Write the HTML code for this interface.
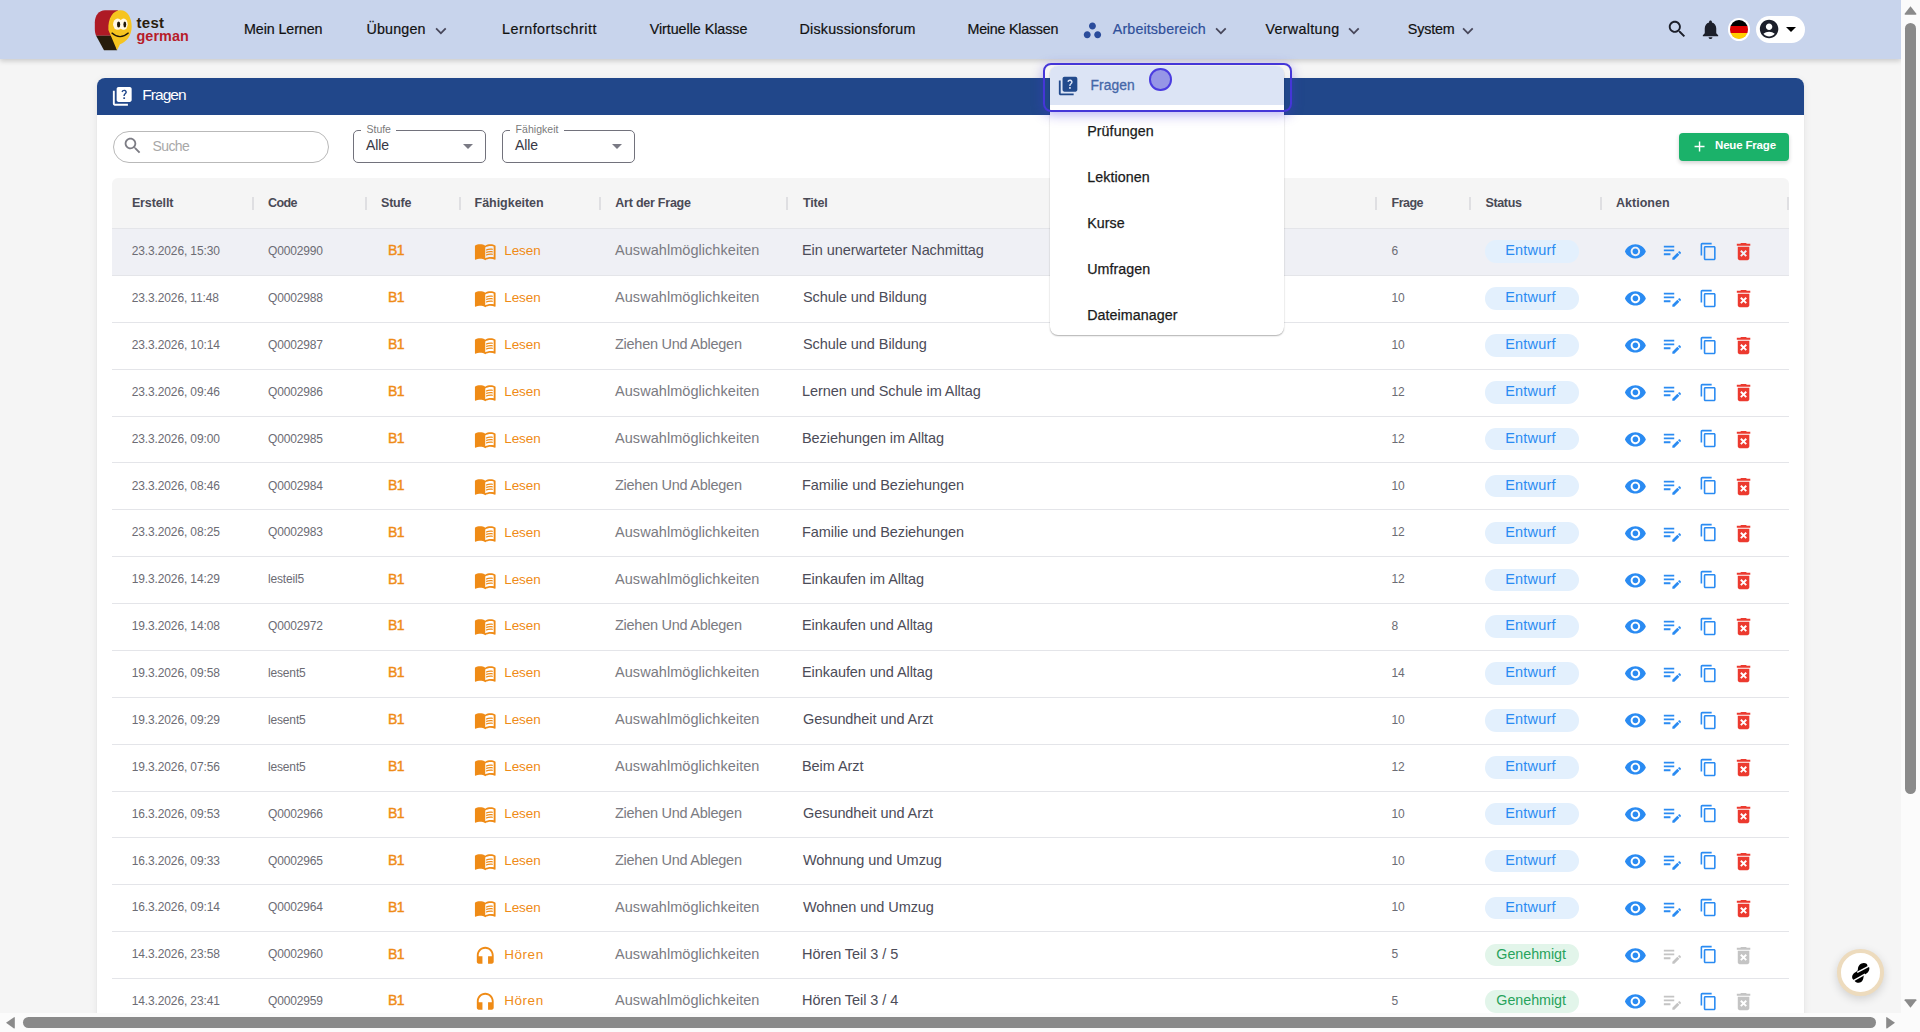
<!DOCTYPE html><html><head><meta charset="utf-8"><style>
*{margin:0;padding:0;box-sizing:border-box}
html,body{width:1920px;height:1032px;overflow:hidden;background:#f5f5f5;font-family:"Liberation Sans",sans-serif}
.t{position:absolute;white-space:nowrap;line-height:1}
.i{position:absolute;display:block;overflow:visible}
#hdr{position:absolute;left:0;top:0;width:1901px;height:59px;background:#c8d4ec;box-shadow:0 2px 5px rgba(0,0,0,0.18)}
#flag{position:absolute;left:1730px;top:20px;width:18px;height:19px;border-radius:50%;overflow:hidden;box-shadow:0 0 0 2px #fff}
#userpill{position:absolute;left:1756px;top:15.5px;width:49px;height:27.5px;border-radius:14px;background:#fff}
#card{position:absolute;left:97px;top:78px;width:1707px;height:1100px;background:#fff;border-radius:8px;box-shadow:0 2px 8px rgba(0,0,0,0.07),0 1px 2px rgba(0,0,0,0.06)}
#cardhdr{position:absolute;left:97px;top:78px;width:1707px;height:37px;background:#21478a;border-radius:8px 8px 0 0}
#sbox{position:absolute;left:113px;top:131px;width:216px;height:32px;border:1px solid #b9b9b9;border-radius:16px}
.sel{position:absolute;top:130px;width:133px;height:33px;border:1px solid #72727c;border-radius:5px}
.gap{position:absolute;top:128px;height:5px;background:#fff}
#btn{position:absolute;left:1679px;top:133px;width:110px;height:28px;background:#1bb26a;border-radius:4px;box-shadow:0 2px 4px rgba(0,0,0,0.18)}
#thead{position:absolute;left:112px;top:178px;width:1677px;height:50px;background:#f5f5f5;border-radius:6px 6px 0 0}
.div{position:absolute;top:197px;width:2px;height:13px;background:#dfdfe2}
.row{position:absolute;left:112px;width:1677px;height:46.875px;border-top:1px solid #e4e5e9}
.chip{position:absolute;left:1485px;width:94px;height:22.5px;border-radius:11.25px}
#menu{position:absolute;left:1050px;top:66px;width:234px;height:269px;background:#fff;border-radius:8px;box-shadow:0 1px 1.5px rgba(0,0,0,0.30),0 0 1px rgba(0,0,0,0.10)}
#mhl{position:absolute;left:1050px;top:66px;width:234px;height:38.7px;background:#dce4f5;border-radius:8px 8px 0 0}
#focus{position:absolute;left:1043px;top:63px;width:248.5px;height:48.7px;border:2px solid #4536d8;border-radius:8px;box-shadow:0 3px 12px rgba(70,55,220,0.38)}
#cursor{position:absolute;left:1149.2px;top:68px;width:22.7px;height:22.7px;border-radius:50%;background:#9696e6;border:2px solid #4b3ce0}
#fab{position:absolute;left:1837.4px;top:949.2px;width:46.5px;height:46.5px;border-radius:50%;background:#fff;border:4px solid #eddbbd;box-shadow:0 3px 10px rgba(0,0,0,0.15)}
#vtrack{position:absolute;left:1901px;top:0;width:19px;height:1013px;background:#fbfbfb}
#htrack{position:absolute;left:0;top:1013px;width:1901px;height:19px;background:#fbfbfb}
#corner{position:absolute;left:1901px;top:1013px;width:19px;height:19px;background:#fbfbfb}
#vthumb{position:absolute;left:1905px;top:23px;width:11px;height:771px;background:#8a8a8a;border-radius:5.5px}
#hthumb{position:absolute;left:23px;top:1017px;width:1853px;height:11px;background:#8a8a8a;border-radius:5.5px}
</style></head><body><div id="hdr"></div>
<svg class="i" style="left:92px;top:6px;width:44px;height:48px" viewBox="0 0 44 48">
<path d="M26 4.2 L13 4.2 C7 4.2 2.8 9.5 2.8 16.5 L2.8 22 C2.8 25.5 3.3 27.8 4.1 29.8 L22 29.8 Z" fill="#ae1a25"/>
<path d="M4.1 29.8 L21 29.8 L25.2 44.3 L12 44.3 Z" fill="#271c0b"/>
<path d="M25 44.3 L16.4 24 C15.8 12 21 4.2 28.5 4.2 C35.5 4.2 39.7 11.5 39.7 20.5 C39.7 29.5 34.5 36 28 38.3 Z" fill="#f6c41f"/>
<ellipse cx="25.7" cy="18.2" rx="4.6" ry="5.6" fill="#fff8e6"/><ellipse cx="31.6" cy="18.2" rx="4.1" ry="5.6" fill="#fff8e6"/>
<ellipse cx="26.6" cy="18.5" rx="1.6" ry="2.9" fill="#1e1608"/><ellipse cx="32.8" cy="18.5" rx="1.4" ry="2.9" fill="#1e1608"/>
<path d="M19.6 26.8 Q28 34.5 36.6 26.8" stroke="#1e1608" stroke-width="1.3" fill="none"/>
</svg>
<div class="t" style="left:136.50px;top:14.50px;font-size:15px;color:#2a1d0e;font-weight:bold;letter-spacing:0.273px;">test</div>
<div class="t" style="left:136.50px;top:28.80px;font-size:14.4px;color:#b71c2a;font-weight:bold;letter-spacing:0.061px;">german</div>
<div class="t" style="left:244.00px;top:21.85px;font-size:14.3px;color:#111;letter-spacing:-0.103px;-webkit-text-stroke:0.2px #111;">Mein Lernen</div>
<div class="t" style="left:366.50px;top:21.85px;font-size:14.3px;color:#111;letter-spacing:0.153px;-webkit-text-stroke:0.2px #111;">Übungen</div>
<svg class="i" style="left:429.76px;top:19.50px;width:21.80px;height:21.80px" viewBox="0 0 24 24"><path fill="#48475a" d="M16.59 8.59 12 13.17 7.41 8.59 6 10l6 6 6-6z"/></svg>
<div class="t" style="left:502.00px;top:21.85px;font-size:14.3px;color:#111;letter-spacing:0.505px;-webkit-text-stroke:0.2px #111;">Lernfortschritt</div>
<div class="t" style="left:649.70px;top:21.85px;font-size:14.3px;color:#111;letter-spacing:-0.042px;-webkit-text-stroke:0.2px #111;">Virtuelle Klasse</div>
<div class="t" style="left:799.60px;top:21.85px;font-size:14.3px;color:#111;letter-spacing:0.193px;-webkit-text-stroke:0.2px #111;">Diskussionsforum</div>
<div class="t" style="left:967.50px;top:21.85px;font-size:14.3px;color:#111;letter-spacing:-0.244px;-webkit-text-stroke:0.2px #111;">Meine Klassen</div>
<svg class="i" style="left:1081.75px;top:19.80px;width:20.90px;height:20.90px" viewBox="0 0 24 24"><path fill="#2b4c9b" d="M6 13c-2.2 0-4 1.8-4 4s1.8 4 4 4 4-1.8 4-4-1.8-4-4-4m6-10C9.8 3 8 4.8 8 7s1.8 4 4 4 4-1.8 4-4-1.8-4-4-4m6 10c-2.2 0-4 1.8-4 4s1.8 4 4 4 4-1.8 4-4-1.8-4-4-4"/></svg>
<div class="t" style="left:1112.80px;top:21.85px;font-size:14.3px;color:#2f4f9a;letter-spacing:0.113px;-webkit-text-stroke:0.2px #2f4f9a;">Arbeitsbereich</div>
<svg class="i" style="left:1209.96px;top:19.50px;width:21.80px;height:21.80px" viewBox="0 0 24 24"><path fill="#48475a" d="M16.59 8.59 12 13.17 7.41 8.59 6 10l6 6 6-6z"/></svg>
<div class="t" style="left:1265.40px;top:21.85px;font-size:14.3px;color:#111;letter-spacing:0.335px;-webkit-text-stroke:0.2px #111;">Verwaltung</div>
<svg class="i" style="left:1342.76px;top:19.50px;width:21.80px;height:21.80px" viewBox="0 0 24 24"><path fill="#48475a" d="M16.59 8.59 12 13.17 7.41 8.59 6 10l6 6 6-6z"/></svg>
<div class="t" style="left:1407.80px;top:21.85px;font-size:14.3px;color:#111;letter-spacing:-0.151px;-webkit-text-stroke:0.2px #111;">System</div>
<svg class="i" style="left:1457.46px;top:19.50px;width:21.80px;height:21.80px" viewBox="0 0 24 24"><path fill="#48475a" d="M16.59 8.59 12 13.17 7.41 8.59 6 10l6 6 6-6z"/></svg>
<svg class="i" style="left:1666.00px;top:18.00px;width:22.30px;height:22.30px" viewBox="0 0 24 24"><path fill="#1c1f2a" d="M15.5 14h-.79l-.28-.27C15.41 12.59 16 11.11 16 9.5 16 5.91 13.09 3 9.5 3S3 5.91 3 9.5 5.91 16 9.5 16c1.61 0 3.09-.59 4.23-1.57l.27.28v.79l5 4.99L20.49 19zm-6 0C7.01 14 5 11.99 5 9.5S7.01 5 9.5 5 14 7.01 14 9.5 11.990 14 9.5 14"/></svg>
<svg class="i" style="left:1698.60px;top:17.60px;width:23.00px;height:23.00px" viewBox="0 0 24 24"><path fill="#1c1f2a" d="M12 22c1.1 0 2-.9 2-2h-4c0 1.1.89 2 2 2m6-6v-5c0-3.07-1.64-5.64-4.5-6.32V4c0-.83-.67-1.5-1.5-1.5s-1.5.67-1.5 1.5v.68C7.63 5.36 6 7.92 6 11v5l-2 2v1h16v-1z"/></svg>
<div id="flag"><div style="height:33.3%;background:#000"></div><div style="height:33.4%;background:#dd0000"></div><div style="height:33.3%;background:#ffce00"></div></div>
<div id="userpill"></div>
<svg class="i" style="left:1758.15px;top:18.15px;width:22.20px;height:22.20px" viewBox="0 0 24 24"><path fill="#1c1f2a" d="M12 2C6.48 2 2 6.48 2 12s4.48 10 10 10 10-4.48 10-10S17.52 2 12 2m0 4c1.93 0 3.5 1.57 3.5 3.5S13.93 13 12 13s-3.5-1.57-3.5-3.5S10.07 6 12 6m0 14c-2.03 0-4.43-.82-6.14-2.88C7.55 15.8 9.68 15 12 15s4.45.8 6.14 2.12C16.43 19.18 14.03 20 12 20"/></svg>
<svg class="i" style="left:1779.00px;top:16.80px;width:24.00px;height:24.00px" viewBox="0 0 24 24"><path fill="#000" d="m7 10 5 5 5-5z"/></svg>
<div id="card"></div><div id="cardhdr"></div>
<svg class="i" style="left:111.10px;top:85.10px;width:22.56px;height:22.56px" viewBox="0 0 24 24"><path fill="#fff" d="M4 6H2v14c0 1.1.9 2 2 2h14v-2H4zm16-4H8c-1.1 0-2 .9-2 2v12c0 1.1.9 2 2 2h12c1.1 0 2-.9 2-2V4c0-1.1-.9-2-2-2m-5.99 13c-.59 0-1.05-.47-1.05-1.05 0-.59.47-1.04 1.05-1.04.59 0 1.04.45 1.04 1.04-.01.58-.45 1.05-1.04 1.05m2.5-6.17c-.63.93-1.23 1.21-1.56 1.81-.13.24-.18.4-.18 1.18h-1.520c0-.41-.06-1.08.26-1.65.41-.73 1.18-1.16 1.63-1.8.48-.68.21-1.94-1.14-1.94-.88 0-1.32.67-1.5 1.23l-1.37-.57C11.51 5.96 12.52 5 13.990 5c1.23 0 2.08.56 2.51 1.26.37.61.58 1.73.01 2.57"/></svg>
<div class="t" style="left:142.30px;top:87.45px;font-size:15.5px;color:#fff;letter-spacing:-0.958px;">Fragen</div>
<div id="sbox"></div>
<svg class="i" style="left:122.30px;top:134.80px;width:21.40px;height:21.40px" viewBox="0 0 24 24"><path fill="#7c7c84" d="M15.5 14h-.79l-.28-.27C15.41 12.59 16 11.11 16 9.5 16 5.91 13.09 3 9.5 3S3 5.91 3 9.5 5.91 16 9.5 16c1.61 0 3.09-.59 4.23-1.57l.27.28v.79l5 4.99L20.49 19zm-6 0C7.01 14 5 11.99 5 9.5S7.01 5 9.5 5 14 7.01 14 9.5 11.990 14 9.5 14"/></svg>
<div class="t" style="left:152.50px;top:139.00px;font-size:14px;color:#a8a8a8;letter-spacing:-0.603px;">Suche</div>
<div class="sel" style="left:353px"></div>
<div class="gap" style="left:360.6px;width:35.20px"></div>
<div class="t" style="left:366.60px;top:123.75px;font-size:10.5px;color:#7a7a7a;letter-spacing:-0.069px;">Stufe</div>
<div class="t" style="left:366.00px;top:138.20px;font-size:14px;color:#383845;letter-spacing:-0.120px;">Alle</div>
<svg class="i" style="left:456.40px;top:134.00px;width:24.00px;height:24.00px" viewBox="0 0 24 24"><path fill="#7a7a84" d="m7 10 5 5 5-5z"/></svg>
<div class="sel" style="left:502px"></div>
<div class="gap" style="left:509.8px;width:53.95px"></div>
<div class="t" style="left:515.60px;top:123.75px;font-size:10.5px;color:#7a7a7a;letter-spacing:0.039px;">Fähigkeit</div>
<div class="t" style="left:515.00px;top:138.20px;font-size:14px;color:#383845;letter-spacing:-0.120px;">Alle</div>
<svg class="i" style="left:605.20px;top:134.00px;width:24.00px;height:24.00px" viewBox="0 0 24 24"><path fill="#7a7a84" d="m7 10 5 5 5-5z"/></svg>
<div id="btn"></div>
<svg class="i" style="left:1690.70px;top:138.10px;width:17.10px;height:17.10px" viewBox="0 0 24 24"><path fill="#fff" d="M19 13h-6v6h-2v-6H5v-2h6V5h2v6h6z"/></svg>
<div class="t" style="left:1715.00px;top:140.25px;font-size:11.5px;color:#fff;font-weight:bold;letter-spacing:-0.171px;">Neue Frage</div>
<div id="thead"></div>
<div class="t" style="left:131.90px;top:196.75px;font-size:12.5px;color:#4a4a55;font-weight:bold;letter-spacing:-0.116px;">Erstellt</div>
<div class="t" style="left:268.00px;top:196.75px;font-size:12.5px;color:#4a4a55;font-weight:bold;letter-spacing:-0.599px;">Code</div>
<div class="t" style="left:381.00px;top:196.75px;font-size:12.5px;color:#4a4a55;font-weight:bold;letter-spacing:-0.200px;">Stufe</div>
<div class="t" style="left:474.60px;top:196.75px;font-size:12.5px;color:#4a4a55;font-weight:bold;letter-spacing:-0.042px;">Fähigkeiten</div>
<div class="t" style="left:615.30px;top:196.75px;font-size:12.5px;color:#4a4a55;font-weight:bold;letter-spacing:-0.237px;">Art der Frage</div>
<div class="t" style="left:803.00px;top:196.75px;font-size:12.5px;color:#4a4a55;font-weight:bold;letter-spacing:-0.200px;">Titel</div>
<div class="t" style="left:1391.60px;top:196.75px;font-size:12.5px;color:#4a4a55;font-weight:bold;letter-spacing:-0.547px;">Frage</div>
<div class="t" style="left:1485.40px;top:196.75px;font-size:12.5px;color:#4a4a55;font-weight:bold;letter-spacing:-0.330px;">Status</div>
<div class="t" style="left:1616.00px;top:196.75px;font-size:12.5px;color:#4a4a55;font-weight:bold;letter-spacing:0.023px;">Aktionen</div>
<div class="div" style="left:252.0px"></div>
<div class="div" style="left:364.5px"></div>
<div class="div" style="left:458.5px"></div>
<div class="div" style="left:599.0px"></div>
<div class="div" style="left:786.0px"></div>
<div class="div" style="left:1375.0px"></div>
<div class="div" style="left:1469.0px"></div>
<div class="div" style="left:1600.0px"></div>
<div class="div" style="left:1787.0px"></div>
<div class="row" style="top:228.000px;background:#eff0f5"></div>
<div class="t" style="left:131.70px;top:245.20px;font-size:12px;color:#6c6c74;letter-spacing:-0.127px;">23.3.2026, 15:30</div>
<div class="t" style="left:268.00px;top:245.20px;font-size:12px;color:#6c6c74;letter-spacing:-0.161px;">Q0002990</div>
<div class="t" style="left:388.00px;top:243.45px;font-size:14px;color:#ef8b16;letter-spacing:-0.500px;-webkit-text-stroke:0.4px #ef8b16;">B1</div>
<svg class="i" style="left:473.86px;top:240.45px;width:22.50px;height:22.50px" viewBox="0 0 24 24"><path fill="#ef8b16" d="M21 5c-1.11-.35-2.33-.5-3.5-.5-1.95 0-4.05.4-5.5 1.5-1.45-1.1-3.55-1.5-5.5-1.5S2.45 4.9 1 6v14.65c0 .25.25.5.5.5.1 0 .15-.05.25-.05C3.1 20.45 5.05 20 6.5 20c1.95 0 4.05.4 5.5 1.5 1.350-.85 3.8-1.5 5.5-1.5 1.65 0 3.35.3 4.75 1.05.1.05.15.05.25.05.25 0 .5-.25.5-.5V6c-.6-.45-1.25-.75-2-1m0 13.5c-1.1-.35-2.3-.5-3.5-.5-1.7 0-4.15.65-5.5 1.5V8c1.35-.85 3.8-1.5 5.5-1.5 1.2 0 2.4.15 3.5.5zM17.5 10.5c.88 0 1.73.09 2.5.26V9.24c-.79-.15-1.64-.24-2.5-.24-1.7 0-3.24.29-4.5.83v1.66c1.13-.64 2.7-.99 4.5-.99M13 12.49v1.66c1.13-.64 2.7-.99 4.5-.99.88 0 1.73.09 2.5.26V11.9c-.79-.15-1.64-.24-2.5-.24-1.7 0-3.24.3-4.5.83m4.5 1.84c-1.7 0-3.24.29-4.5.83v1.66c1.13-.64 2.7-.99 4.5-.99.88 0 1.73.09 2.5.26v-1.52c-.79-.16-1.64-.24-2.5-.24"/></svg>
<div class="t" style="left:504.20px;top:244.45px;font-size:13.5px;color:#ef8b16;letter-spacing:-0.069px;">Lesen</div>
<div class="t" style="left:615.00px;top:243.45px;font-size:14.5px;color:#7b7b82;letter-spacing:0.050px;">Auswahlmöglichkeiten</div>
<div class="t" style="left:802.00px;top:243.45px;font-size:14.5px;color:#4c4c58;letter-spacing:-0.070px;">Ein unerwarteter Nachmittag</div>
<div class="t" style="left:1391.40px;top:245.20px;font-size:12px;color:#6c6c74;letter-spacing:-0.127px;">6</div>
<div class="chip" style="top:240.450px;background:#e3f0fd"></div>
<div class="t" style="left:1505.20px;top:243.45px;font-size:14.5px;color:#2a8bf2;letter-spacing:0.212px;">Entwurf</div>
<svg class="i" style="left:1623.85px;top:240.45px;width:22.80px;height:22.80px" viewBox="0 0 24 24"><path fill="#2a8bf2" d="M12 4.5C7 4.5 2.73 7.61 1 12c1.730 4.39 6 7.5 11 7.5s9.27-3.11 11-7.5c-1.73-4.39-6-7.5-11-7.5M12 17c-2.76 0-5-2.24-5-5s2.24-5 5-5 5 2.24 5 5-2.24 5-5 5m0-8c-1.66 0-3 1.34-3 3s1.34 3 3 3 3-1.34 3-3-1.34-3-3-3"/></svg>
<svg class="i" style="left:1661.20px;top:240.45px;width:22.70px;height:22.70px" viewBox="0 0 24 24"><path fill="#2a8bf2" d="M3 10h11v2H3zm0-2h11V6H3zm0 8h7v-2H3zm15.01-3.13.71-.71c.39-.39 1.02-.39 1.41 0l.71.71c.39.39.39 1.02 0 1.41l-.71.71zm-.71.71-5.3 5.3V21h2.12l5.3-5.3z"/></svg>
<svg class="i" style="left:1698.70px;top:241.90px;width:19.00px;height:19.00px" viewBox="0 0 24 24"><path fill="#2a8bf2" d="M16 1H4c-1.1 0-2 .9-2 2v14h2V3h12V1zm3 4H8c-1.1 0-2 .9-2 2v14c0 1.1.9 2 2 2h11c1.1 0 2-.9 2-2V7c0-1.1-.9-2-2-2zm0 16H8V7h11v14z"/></svg>
<svg class="i" style="left:1731.75px;top:240.45px;width:23.10px;height:23.10px" viewBox="0 0 24 24"><path fill="#ec3a2f" d="M6 19c0 1.1.9 2 2 2h8c1.1 0 2-.9 2-2V7H6zm2.46-7.12 1.41-1.41L12 12.59l2.12-2.12 1.41 1.41L13.41 14l2.12 2.12-1.41 1.41L12 15.41l-2.12 2.12-1.41-1.41L10.59 14zM15.5 4l-1-1h-5l-1 1H5v2h14V4z"/></svg>
<div class="row" style="top:274.875px;background:#fff"></div>
<div class="t" style="left:131.70px;top:292.07px;font-size:12px;color:#6c6c74;letter-spacing:-0.127px;">23.3.2026, 11:48</div>
<div class="t" style="left:268.00px;top:292.07px;font-size:12px;color:#6c6c74;letter-spacing:-0.161px;">Q0002988</div>
<div class="t" style="left:388.00px;top:290.32px;font-size:14px;color:#ef8b16;letter-spacing:-0.500px;-webkit-text-stroke:0.4px #ef8b16;">B1</div>
<svg class="i" style="left:473.86px;top:287.32px;width:22.50px;height:22.50px" viewBox="0 0 24 24"><path fill="#ef8b16" d="M21 5c-1.11-.35-2.33-.5-3.5-.5-1.95 0-4.05.4-5.5 1.5-1.45-1.1-3.55-1.5-5.5-1.5S2.45 4.9 1 6v14.65c0 .25.25.5.5.5.1 0 .15-.05.25-.05C3.1 20.45 5.05 20 6.5 20c1.95 0 4.05.4 5.5 1.5 1.350-.85 3.8-1.5 5.5-1.5 1.65 0 3.35.3 4.75 1.05.1.05.15.05.25.05.25 0 .5-.25.5-.5V6c-.6-.45-1.25-.75-2-1m0 13.5c-1.1-.35-2.3-.5-3.5-.5-1.7 0-4.15.65-5.5 1.5V8c1.35-.85 3.8-1.5 5.5-1.5 1.2 0 2.4.15 3.5.5zM17.5 10.5c.88 0 1.73.09 2.5.26V9.24c-.79-.15-1.64-.24-2.5-.24-1.7 0-3.24.29-4.5.83v1.66c1.13-.64 2.7-.99 4.5-.99M13 12.49v1.66c1.13-.64 2.7-.99 4.5-.99.88 0 1.73.09 2.5.26V11.9c-.79-.15-1.64-.24-2.5-.24-1.7 0-3.24.3-4.5.83m4.5 1.84c-1.7 0-3.24.29-4.5.83v1.66c1.13-.64 2.7-.99 4.5-.99.88 0 1.73.09 2.5.26v-1.52c-.79-.16-1.64-.24-2.5-.24"/></svg>
<div class="t" style="left:504.20px;top:291.32px;font-size:13.5px;color:#ef8b16;letter-spacing:-0.069px;">Lesen</div>
<div class="t" style="left:615.00px;top:290.32px;font-size:14.5px;color:#7b7b82;letter-spacing:0.050px;">Auswahlmöglichkeiten</div>
<div class="t" style="left:803.00px;top:290.32px;font-size:14.5px;color:#4c4c58;letter-spacing:-0.070px;">Schule und Bildung</div>
<div class="t" style="left:1391.40px;top:292.07px;font-size:12px;color:#6c6c74;letter-spacing:-0.127px;">10</div>
<div class="chip" style="top:287.325px;background:#e3f0fd"></div>
<div class="t" style="left:1505.20px;top:290.32px;font-size:14.5px;color:#2a8bf2;letter-spacing:0.212px;">Entwurf</div>
<svg class="i" style="left:1623.85px;top:287.32px;width:22.80px;height:22.80px" viewBox="0 0 24 24"><path fill="#2a8bf2" d="M12 4.5C7 4.5 2.73 7.61 1 12c1.730 4.39 6 7.5 11 7.5s9.27-3.11 11-7.5c-1.73-4.39-6-7.5-11-7.5M12 17c-2.76 0-5-2.24-5-5s2.24-5 5-5 5 2.24 5 5-2.24 5-5 5m0-8c-1.66 0-3 1.34-3 3s1.34 3 3 3 3-1.34 3-3-1.34-3-3-3"/></svg>
<svg class="i" style="left:1661.20px;top:287.32px;width:22.70px;height:22.70px" viewBox="0 0 24 24"><path fill="#2a8bf2" d="M3 10h11v2H3zm0-2h11V6H3zm0 8h7v-2H3zm15.01-3.13.71-.71c.39-.39 1.02-.39 1.41 0l.71.71c.39.39.39 1.02 0 1.41l-.71.71zm-.71.71-5.3 5.3V21h2.12l5.3-5.3z"/></svg>
<svg class="i" style="left:1698.70px;top:288.77px;width:19.00px;height:19.00px" viewBox="0 0 24 24"><path fill="#2a8bf2" d="M16 1H4c-1.1 0-2 .9-2 2v14h2V3h12V1zm3 4H8c-1.1 0-2 .9-2 2v14c0 1.1.9 2 2 2h11c1.1 0 2-.9 2-2V7c0-1.1-.9-2-2-2zm0 16H8V7h11v14z"/></svg>
<svg class="i" style="left:1731.75px;top:287.32px;width:23.10px;height:23.10px" viewBox="0 0 24 24"><path fill="#ec3a2f" d="M6 19c0 1.1.9 2 2 2h8c1.1 0 2-.9 2-2V7H6zm2.46-7.12 1.41-1.41L12 12.59l2.12-2.12 1.41 1.41L13.41 14l2.12 2.12-1.41 1.41L12 15.41l-2.12 2.12-1.41-1.41L10.59 14zM15.5 4l-1-1h-5l-1 1H5v2h14V4z"/></svg>
<div class="row" style="top:321.750px;background:#fff"></div>
<div class="t" style="left:131.70px;top:338.95px;font-size:12px;color:#6c6c74;letter-spacing:-0.127px;">23.3.2026, 10:14</div>
<div class="t" style="left:268.00px;top:338.95px;font-size:12px;color:#6c6c74;letter-spacing:-0.161px;">Q0002987</div>
<div class="t" style="left:388.00px;top:337.20px;font-size:14px;color:#ef8b16;letter-spacing:-0.500px;-webkit-text-stroke:0.4px #ef8b16;">B1</div>
<svg class="i" style="left:473.86px;top:334.20px;width:22.50px;height:22.50px" viewBox="0 0 24 24"><path fill="#ef8b16" d="M21 5c-1.11-.35-2.33-.5-3.5-.5-1.95 0-4.05.4-5.5 1.5-1.45-1.1-3.55-1.5-5.5-1.5S2.45 4.9 1 6v14.65c0 .25.25.5.5.5.1 0 .15-.05.25-.05C3.1 20.45 5.05 20 6.5 20c1.95 0 4.05.4 5.5 1.5 1.350-.85 3.8-1.5 5.5-1.5 1.65 0 3.35.3 4.75 1.05.1.05.15.05.25.05.25 0 .5-.25.5-.5V6c-.6-.45-1.25-.75-2-1m0 13.5c-1.1-.35-2.3-.5-3.5-.5-1.7 0-4.15.65-5.5 1.5V8c1.35-.85 3.8-1.5 5.5-1.5 1.2 0 2.4.15 3.5.5zM17.5 10.5c.88 0 1.73.09 2.5.26V9.24c-.79-.15-1.64-.24-2.5-.24-1.7 0-3.24.29-4.5.83v1.66c1.13-.64 2.7-.99 4.5-.99M13 12.49v1.66c1.13-.64 2.7-.99 4.5-.99.88 0 1.73.09 2.5.26V11.9c-.79-.15-1.64-.24-2.5-.24-1.7 0-3.24.3-4.5.83m4.5 1.84c-1.7 0-3.24.29-4.5.83v1.66c1.13-.64 2.7-.99 4.5-.99.88 0 1.73.09 2.5.26v-1.52c-.79-.16-1.64-.24-2.5-.24"/></svg>
<div class="t" style="left:504.20px;top:338.20px;font-size:13.5px;color:#ef8b16;letter-spacing:-0.069px;">Lesen</div>
<div class="t" style="left:615.00px;top:337.20px;font-size:14.5px;color:#7b7b82;letter-spacing:-0.260px;">Ziehen Und Ablegen</div>
<div class="t" style="left:803.00px;top:337.20px;font-size:14.5px;color:#4c4c58;letter-spacing:-0.070px;">Schule und Bildung</div>
<div class="t" style="left:1391.40px;top:338.95px;font-size:12px;color:#6c6c74;letter-spacing:-0.127px;">10</div>
<div class="chip" style="top:334.200px;background:#e3f0fd"></div>
<div class="t" style="left:1505.20px;top:337.20px;font-size:14.5px;color:#2a8bf2;letter-spacing:0.212px;">Entwurf</div>
<svg class="i" style="left:1623.85px;top:334.20px;width:22.80px;height:22.80px" viewBox="0 0 24 24"><path fill="#2a8bf2" d="M12 4.5C7 4.5 2.73 7.61 1 12c1.730 4.39 6 7.5 11 7.5s9.27-3.11 11-7.5c-1.73-4.39-6-7.5-11-7.5M12 17c-2.76 0-5-2.24-5-5s2.24-5 5-5 5 2.24 5 5-2.24 5-5 5m0-8c-1.66 0-3 1.34-3 3s1.34 3 3 3 3-1.34 3-3-1.34-3-3-3"/></svg>
<svg class="i" style="left:1661.20px;top:334.20px;width:22.70px;height:22.70px" viewBox="0 0 24 24"><path fill="#2a8bf2" d="M3 10h11v2H3zm0-2h11V6H3zm0 8h7v-2H3zm15.01-3.13.71-.71c.39-.39 1.02-.39 1.41 0l.71.71c.39.39.39 1.02 0 1.41l-.71.71zm-.71.71-5.3 5.3V21h2.12l5.3-5.3z"/></svg>
<svg class="i" style="left:1698.70px;top:335.65px;width:19.00px;height:19.00px" viewBox="0 0 24 24"><path fill="#2a8bf2" d="M16 1H4c-1.1 0-2 .9-2 2v14h2V3h12V1zm3 4H8c-1.1 0-2 .9-2 2v14c0 1.1.9 2 2 2h11c1.1 0 2-.9 2-2V7c0-1.1-.9-2-2-2zm0 16H8V7h11v14z"/></svg>
<svg class="i" style="left:1731.75px;top:334.20px;width:23.10px;height:23.10px" viewBox="0 0 24 24"><path fill="#ec3a2f" d="M6 19c0 1.1.9 2 2 2h8c1.1 0 2-.9 2-2V7H6zm2.46-7.12 1.41-1.41L12 12.59l2.12-2.12 1.41 1.41L13.41 14l2.12 2.12-1.41 1.41L12 15.41l-2.12 2.12-1.41-1.41L10.59 14zM15.5 4l-1-1h-5l-1 1H5v2h14V4z"/></svg>
<div class="row" style="top:368.625px;background:#fff"></div>
<div class="t" style="left:131.70px;top:385.82px;font-size:12px;color:#6c6c74;letter-spacing:-0.127px;">23.3.2026, 09:46</div>
<div class="t" style="left:268.00px;top:385.82px;font-size:12px;color:#6c6c74;letter-spacing:-0.161px;">Q0002986</div>
<div class="t" style="left:388.00px;top:384.07px;font-size:14px;color:#ef8b16;letter-spacing:-0.500px;-webkit-text-stroke:0.4px #ef8b16;">B1</div>
<svg class="i" style="left:473.86px;top:381.07px;width:22.50px;height:22.50px" viewBox="0 0 24 24"><path fill="#ef8b16" d="M21 5c-1.11-.35-2.33-.5-3.5-.5-1.95 0-4.05.4-5.5 1.5-1.45-1.1-3.55-1.5-5.5-1.5S2.45 4.9 1 6v14.65c0 .25.25.5.5.5.1 0 .15-.05.25-.05C3.1 20.45 5.05 20 6.5 20c1.95 0 4.05.4 5.5 1.5 1.350-.85 3.8-1.5 5.5-1.5 1.65 0 3.35.3 4.75 1.05.1.05.15.05.25.05.25 0 .5-.25.5-.5V6c-.6-.45-1.25-.75-2-1m0 13.5c-1.1-.35-2.3-.5-3.5-.5-1.7 0-4.15.65-5.5 1.5V8c1.35-.85 3.8-1.5 5.5-1.5 1.2 0 2.4.15 3.5.5zM17.5 10.5c.88 0 1.73.09 2.5.26V9.24c-.79-.15-1.64-.24-2.5-.24-1.7 0-3.24.29-4.5.83v1.66c1.13-.64 2.7-.99 4.5-.99M13 12.49v1.66c1.13-.64 2.7-.99 4.5-.99.88 0 1.73.09 2.5.26V11.9c-.79-.15-1.64-.24-2.5-.24-1.7 0-3.24.3-4.5.83m4.5 1.84c-1.7 0-3.24.29-4.5.83v1.66c1.13-.64 2.7-.99 4.5-.99.88 0 1.73.09 2.5.26v-1.52c-.79-.16-1.64-.24-2.5-.24"/></svg>
<div class="t" style="left:504.20px;top:385.07px;font-size:13.5px;color:#ef8b16;letter-spacing:-0.069px;">Lesen</div>
<div class="t" style="left:615.00px;top:384.07px;font-size:14.5px;color:#7b7b82;letter-spacing:0.050px;">Auswahlmöglichkeiten</div>
<div class="t" style="left:802.00px;top:384.07px;font-size:14.5px;color:#4c4c58;letter-spacing:-0.070px;">Lernen und Schule im Alltag</div>
<div class="t" style="left:1391.40px;top:385.82px;font-size:12px;color:#6c6c74;letter-spacing:-0.127px;">12</div>
<div class="chip" style="top:381.075px;background:#e3f0fd"></div>
<div class="t" style="left:1505.20px;top:384.07px;font-size:14.5px;color:#2a8bf2;letter-spacing:0.212px;">Entwurf</div>
<svg class="i" style="left:1623.85px;top:381.07px;width:22.80px;height:22.80px" viewBox="0 0 24 24"><path fill="#2a8bf2" d="M12 4.5C7 4.5 2.73 7.61 1 12c1.730 4.39 6 7.5 11 7.5s9.27-3.11 11-7.5c-1.73-4.39-6-7.5-11-7.5M12 17c-2.76 0-5-2.24-5-5s2.24-5 5-5 5 2.24 5 5-2.24 5-5 5m0-8c-1.66 0-3 1.34-3 3s1.34 3 3 3 3-1.34 3-3-1.34-3-3-3"/></svg>
<svg class="i" style="left:1661.20px;top:381.07px;width:22.70px;height:22.70px" viewBox="0 0 24 24"><path fill="#2a8bf2" d="M3 10h11v2H3zm0-2h11V6H3zm0 8h7v-2H3zm15.01-3.13.71-.71c.39-.39 1.02-.39 1.41 0l.71.71c.39.39.39 1.02 0 1.41l-.71.71zm-.71.71-5.3 5.3V21h2.12l5.3-5.3z"/></svg>
<svg class="i" style="left:1698.70px;top:382.52px;width:19.00px;height:19.00px" viewBox="0 0 24 24"><path fill="#2a8bf2" d="M16 1H4c-1.1 0-2 .9-2 2v14h2V3h12V1zm3 4H8c-1.1 0-2 .9-2 2v14c0 1.1.9 2 2 2h11c1.1 0 2-.9 2-2V7c0-1.1-.9-2-2-2zm0 16H8V7h11v14z"/></svg>
<svg class="i" style="left:1731.75px;top:381.07px;width:23.10px;height:23.10px" viewBox="0 0 24 24"><path fill="#ec3a2f" d="M6 19c0 1.1.9 2 2 2h8c1.1 0 2-.9 2-2V7H6zm2.46-7.12 1.41-1.41L12 12.59l2.12-2.12 1.41 1.41L13.41 14l2.12 2.12-1.41 1.41L12 15.41l-2.12 2.12-1.41-1.41L10.59 14zM15.5 4l-1-1h-5l-1 1H5v2h14V4z"/></svg>
<div class="row" style="top:415.500px;background:#fff"></div>
<div class="t" style="left:131.70px;top:432.70px;font-size:12px;color:#6c6c74;letter-spacing:-0.127px;">23.3.2026, 09:00</div>
<div class="t" style="left:268.00px;top:432.70px;font-size:12px;color:#6c6c74;letter-spacing:-0.161px;">Q0002985</div>
<div class="t" style="left:388.00px;top:430.95px;font-size:14px;color:#ef8b16;letter-spacing:-0.500px;-webkit-text-stroke:0.4px #ef8b16;">B1</div>
<svg class="i" style="left:473.86px;top:427.95px;width:22.50px;height:22.50px" viewBox="0 0 24 24"><path fill="#ef8b16" d="M21 5c-1.11-.35-2.33-.5-3.5-.5-1.95 0-4.05.4-5.5 1.5-1.45-1.1-3.55-1.5-5.5-1.5S2.45 4.9 1 6v14.65c0 .25.25.5.5.5.1 0 .15-.05.25-.05C3.1 20.45 5.05 20 6.5 20c1.95 0 4.05.4 5.5 1.5 1.350-.85 3.8-1.5 5.5-1.5 1.65 0 3.35.3 4.75 1.05.1.05.15.05.25.05.25 0 .5-.25.5-.5V6c-.6-.45-1.25-.75-2-1m0 13.5c-1.1-.35-2.3-.5-3.5-.5-1.7 0-4.15.65-5.5 1.5V8c1.35-.85 3.8-1.5 5.5-1.5 1.2 0 2.4.15 3.5.5zM17.5 10.5c.88 0 1.73.09 2.5.26V9.24c-.79-.15-1.64-.24-2.5-.24-1.7 0-3.24.29-4.5.83v1.66c1.13-.64 2.7-.99 4.5-.99M13 12.49v1.66c1.13-.64 2.7-.99 4.5-.99.88 0 1.73.09 2.5.26V11.9c-.79-.15-1.64-.24-2.5-.24-1.7 0-3.24.3-4.5.83m4.5 1.84c-1.7 0-3.24.29-4.5.83v1.66c1.13-.64 2.7-.99 4.5-.99.88 0 1.73.09 2.5.26v-1.52c-.79-.16-1.64-.24-2.5-.24"/></svg>
<div class="t" style="left:504.20px;top:431.95px;font-size:13.5px;color:#ef8b16;letter-spacing:-0.069px;">Lesen</div>
<div class="t" style="left:615.00px;top:430.95px;font-size:14.5px;color:#7b7b82;letter-spacing:0.050px;">Auswahlmöglichkeiten</div>
<div class="t" style="left:802.00px;top:430.95px;font-size:14.5px;color:#4c4c58;letter-spacing:-0.070px;">Beziehungen im Alltag</div>
<div class="t" style="left:1391.40px;top:432.70px;font-size:12px;color:#6c6c74;letter-spacing:-0.127px;">12</div>
<div class="chip" style="top:427.950px;background:#e3f0fd"></div>
<div class="t" style="left:1505.20px;top:430.95px;font-size:14.5px;color:#2a8bf2;letter-spacing:0.212px;">Entwurf</div>
<svg class="i" style="left:1623.85px;top:427.95px;width:22.80px;height:22.80px" viewBox="0 0 24 24"><path fill="#2a8bf2" d="M12 4.5C7 4.5 2.73 7.61 1 12c1.730 4.39 6 7.5 11 7.5s9.27-3.11 11-7.5c-1.73-4.39-6-7.5-11-7.5M12 17c-2.76 0-5-2.24-5-5s2.24-5 5-5 5 2.24 5 5-2.24 5-5 5m0-8c-1.66 0-3 1.34-3 3s1.34 3 3 3 3-1.34 3-3-1.34-3-3-3"/></svg>
<svg class="i" style="left:1661.20px;top:427.95px;width:22.70px;height:22.70px" viewBox="0 0 24 24"><path fill="#2a8bf2" d="M3 10h11v2H3zm0-2h11V6H3zm0 8h7v-2H3zm15.01-3.13.71-.71c.39-.39 1.02-.39 1.41 0l.71.71c.39.39.39 1.02 0 1.41l-.71.71zm-.71.71-5.3 5.3V21h2.12l5.3-5.3z"/></svg>
<svg class="i" style="left:1698.70px;top:429.40px;width:19.00px;height:19.00px" viewBox="0 0 24 24"><path fill="#2a8bf2" d="M16 1H4c-1.1 0-2 .9-2 2v14h2V3h12V1zm3 4H8c-1.1 0-2 .9-2 2v14c0 1.1.9 2 2 2h11c1.1 0 2-.9 2-2V7c0-1.1-.9-2-2-2zm0 16H8V7h11v14z"/></svg>
<svg class="i" style="left:1731.75px;top:427.95px;width:23.10px;height:23.10px" viewBox="0 0 24 24"><path fill="#ec3a2f" d="M6 19c0 1.1.9 2 2 2h8c1.1 0 2-.9 2-2V7H6zm2.46-7.12 1.41-1.41L12 12.59l2.12-2.12 1.41 1.41L13.41 14l2.12 2.12-1.41 1.41L12 15.41l-2.12 2.12-1.41-1.41L10.59 14zM15.5 4l-1-1h-5l-1 1H5v2h14V4z"/></svg>
<div class="row" style="top:462.375px;background:#fff"></div>
<div class="t" style="left:131.70px;top:479.57px;font-size:12px;color:#6c6c74;letter-spacing:-0.127px;">23.3.2026, 08:46</div>
<div class="t" style="left:268.00px;top:479.57px;font-size:12px;color:#6c6c74;letter-spacing:-0.161px;">Q0002984</div>
<div class="t" style="left:388.00px;top:477.82px;font-size:14px;color:#ef8b16;letter-spacing:-0.500px;-webkit-text-stroke:0.4px #ef8b16;">B1</div>
<svg class="i" style="left:473.86px;top:474.82px;width:22.50px;height:22.50px" viewBox="0 0 24 24"><path fill="#ef8b16" d="M21 5c-1.11-.35-2.33-.5-3.5-.5-1.95 0-4.05.4-5.5 1.5-1.45-1.1-3.55-1.5-5.5-1.5S2.45 4.9 1 6v14.65c0 .25.25.5.5.5.1 0 .15-.05.25-.05C3.1 20.45 5.05 20 6.5 20c1.95 0 4.05.4 5.5 1.5 1.350-.85 3.8-1.5 5.5-1.5 1.65 0 3.35.3 4.75 1.05.1.05.15.05.25.05.25 0 .5-.25.5-.5V6c-.6-.45-1.25-.75-2-1m0 13.5c-1.1-.35-2.3-.5-3.5-.5-1.7 0-4.15.65-5.5 1.5V8c1.35-.85 3.8-1.5 5.5-1.5 1.2 0 2.4.15 3.5.5zM17.5 10.5c.88 0 1.73.09 2.5.26V9.24c-.79-.15-1.64-.24-2.5-.24-1.7 0-3.24.29-4.5.83v1.66c1.13-.64 2.7-.99 4.5-.99M13 12.49v1.66c1.13-.64 2.7-.99 4.5-.99.88 0 1.73.09 2.5.26V11.9c-.79-.15-1.64-.24-2.5-.24-1.7 0-3.24.3-4.5.83m4.5 1.84c-1.7 0-3.24.29-4.5.83v1.66c1.13-.64 2.7-.99 4.5-.99.88 0 1.73.09 2.5.26v-1.52c-.79-.16-1.64-.24-2.5-.24"/></svg>
<div class="t" style="left:504.20px;top:478.82px;font-size:13.5px;color:#ef8b16;letter-spacing:-0.069px;">Lesen</div>
<div class="t" style="left:615.00px;top:477.82px;font-size:14.5px;color:#7b7b82;letter-spacing:-0.260px;">Ziehen Und Ablegen</div>
<div class="t" style="left:802.00px;top:477.82px;font-size:14.5px;color:#4c4c58;letter-spacing:-0.070px;">Familie und Beziehungen</div>
<div class="t" style="left:1391.40px;top:479.57px;font-size:12px;color:#6c6c74;letter-spacing:-0.127px;">10</div>
<div class="chip" style="top:474.825px;background:#e3f0fd"></div>
<div class="t" style="left:1505.20px;top:477.82px;font-size:14.5px;color:#2a8bf2;letter-spacing:0.212px;">Entwurf</div>
<svg class="i" style="left:1623.85px;top:474.82px;width:22.80px;height:22.80px" viewBox="0 0 24 24"><path fill="#2a8bf2" d="M12 4.5C7 4.5 2.73 7.61 1 12c1.730 4.39 6 7.5 11 7.5s9.27-3.11 11-7.5c-1.73-4.39-6-7.5-11-7.5M12 17c-2.76 0-5-2.24-5-5s2.24-5 5-5 5 2.24 5 5-2.24 5-5 5m0-8c-1.66 0-3 1.34-3 3s1.34 3 3 3 3-1.34 3-3-1.34-3-3-3"/></svg>
<svg class="i" style="left:1661.20px;top:474.82px;width:22.70px;height:22.70px" viewBox="0 0 24 24"><path fill="#2a8bf2" d="M3 10h11v2H3zm0-2h11V6H3zm0 8h7v-2H3zm15.01-3.13.71-.71c.39-.39 1.02-.39 1.41 0l.71.71c.39.39.39 1.02 0 1.41l-.71.71zm-.71.71-5.3 5.3V21h2.12l5.3-5.3z"/></svg>
<svg class="i" style="left:1698.70px;top:476.27px;width:19.00px;height:19.00px" viewBox="0 0 24 24"><path fill="#2a8bf2" d="M16 1H4c-1.1 0-2 .9-2 2v14h2V3h12V1zm3 4H8c-1.1 0-2 .9-2 2v14c0 1.1.9 2 2 2h11c1.1 0 2-.9 2-2V7c0-1.1-.9-2-2-2zm0 16H8V7h11v14z"/></svg>
<svg class="i" style="left:1731.75px;top:474.82px;width:23.10px;height:23.10px" viewBox="0 0 24 24"><path fill="#ec3a2f" d="M6 19c0 1.1.9 2 2 2h8c1.1 0 2-.9 2-2V7H6zm2.46-7.12 1.41-1.41L12 12.59l2.12-2.12 1.41 1.41L13.41 14l2.12 2.12-1.41 1.41L12 15.41l-2.12 2.12-1.41-1.41L10.59 14zM15.5 4l-1-1h-5l-1 1H5v2h14V4z"/></svg>
<div class="row" style="top:509.250px;background:#fff"></div>
<div class="t" style="left:131.70px;top:526.45px;font-size:12px;color:#6c6c74;letter-spacing:-0.127px;">23.3.2026, 08:25</div>
<div class="t" style="left:268.00px;top:526.45px;font-size:12px;color:#6c6c74;letter-spacing:-0.161px;">Q0002983</div>
<div class="t" style="left:388.00px;top:524.70px;font-size:14px;color:#ef8b16;letter-spacing:-0.500px;-webkit-text-stroke:0.4px #ef8b16;">B1</div>
<svg class="i" style="left:473.86px;top:521.70px;width:22.50px;height:22.50px" viewBox="0 0 24 24"><path fill="#ef8b16" d="M21 5c-1.11-.35-2.33-.5-3.5-.5-1.95 0-4.05.4-5.5 1.5-1.45-1.1-3.55-1.5-5.5-1.5S2.45 4.9 1 6v14.65c0 .25.25.5.5.5.1 0 .15-.05.25-.05C3.1 20.45 5.05 20 6.5 20c1.95 0 4.05.4 5.5 1.5 1.350-.85 3.8-1.5 5.5-1.5 1.65 0 3.35.3 4.75 1.05.1.05.15.05.25.05.25 0 .5-.25.5-.5V6c-.6-.45-1.25-.75-2-1m0 13.5c-1.1-.35-2.3-.5-3.5-.5-1.7 0-4.15.65-5.5 1.5V8c1.35-.85 3.8-1.5 5.5-1.5 1.2 0 2.4.15 3.5.5zM17.5 10.5c.88 0 1.73.09 2.5.26V9.24c-.79-.15-1.64-.24-2.5-.24-1.7 0-3.24.29-4.5.83v1.66c1.13-.64 2.7-.99 4.5-.99M13 12.49v1.66c1.13-.64 2.7-.99 4.5-.99.88 0 1.73.09 2.5.26V11.9c-.79-.15-1.64-.24-2.5-.24-1.7 0-3.24.3-4.5.83m4.5 1.84c-1.7 0-3.24.29-4.5.83v1.66c1.13-.64 2.7-.99 4.5-.99.88 0 1.73.09 2.5.26v-1.52c-.79-.16-1.64-.24-2.5-.24"/></svg>
<div class="t" style="left:504.20px;top:525.70px;font-size:13.5px;color:#ef8b16;letter-spacing:-0.069px;">Lesen</div>
<div class="t" style="left:615.00px;top:524.70px;font-size:14.5px;color:#7b7b82;letter-spacing:0.050px;">Auswahlmöglichkeiten</div>
<div class="t" style="left:802.00px;top:524.70px;font-size:14.5px;color:#4c4c58;letter-spacing:-0.070px;">Familie und Beziehungen</div>
<div class="t" style="left:1391.40px;top:526.45px;font-size:12px;color:#6c6c74;letter-spacing:-0.127px;">12</div>
<div class="chip" style="top:521.700px;background:#e3f0fd"></div>
<div class="t" style="left:1505.20px;top:524.70px;font-size:14.5px;color:#2a8bf2;letter-spacing:0.212px;">Entwurf</div>
<svg class="i" style="left:1623.85px;top:521.70px;width:22.80px;height:22.80px" viewBox="0 0 24 24"><path fill="#2a8bf2" d="M12 4.5C7 4.5 2.73 7.61 1 12c1.730 4.39 6 7.5 11 7.5s9.27-3.11 11-7.5c-1.73-4.39-6-7.5-11-7.5M12 17c-2.76 0-5-2.24-5-5s2.24-5 5-5 5 2.24 5 5-2.24 5-5 5m0-8c-1.66 0-3 1.34-3 3s1.34 3 3 3 3-1.34 3-3-1.34-3-3-3"/></svg>
<svg class="i" style="left:1661.20px;top:521.70px;width:22.70px;height:22.70px" viewBox="0 0 24 24"><path fill="#2a8bf2" d="M3 10h11v2H3zm0-2h11V6H3zm0 8h7v-2H3zm15.01-3.13.71-.71c.39-.39 1.02-.39 1.41 0l.71.71c.39.39.39 1.02 0 1.41l-.71.71zm-.71.71-5.3 5.3V21h2.12l5.3-5.3z"/></svg>
<svg class="i" style="left:1698.70px;top:523.15px;width:19.00px;height:19.00px" viewBox="0 0 24 24"><path fill="#2a8bf2" d="M16 1H4c-1.1 0-2 .9-2 2v14h2V3h12V1zm3 4H8c-1.1 0-2 .9-2 2v14c0 1.1.9 2 2 2h11c1.1 0 2-.9 2-2V7c0-1.1-.9-2-2-2zm0 16H8V7h11v14z"/></svg>
<svg class="i" style="left:1731.75px;top:521.70px;width:23.10px;height:23.10px" viewBox="0 0 24 24"><path fill="#ec3a2f" d="M6 19c0 1.1.9 2 2 2h8c1.1 0 2-.9 2-2V7H6zm2.46-7.12 1.41-1.41L12 12.59l2.12-2.12 1.41 1.41L13.41 14l2.12 2.12-1.41 1.41L12 15.41l-2.12 2.12-1.41-1.41L10.59 14zM15.5 4l-1-1h-5l-1 1H5v2h14V4z"/></svg>
<div class="row" style="top:556.125px;background:#fff"></div>
<div class="t" style="left:131.70px;top:573.33px;font-size:12px;color:#6c6c74;letter-spacing:-0.127px;">19.3.2026, 14:29</div>
<div class="t" style="left:268.00px;top:573.33px;font-size:12px;color:#6c6c74;letter-spacing:-0.161px;">lesteil5</div>
<div class="t" style="left:388.00px;top:571.58px;font-size:14px;color:#ef8b16;letter-spacing:-0.500px;-webkit-text-stroke:0.4px #ef8b16;">B1</div>
<svg class="i" style="left:473.86px;top:568.58px;width:22.50px;height:22.50px" viewBox="0 0 24 24"><path fill="#ef8b16" d="M21 5c-1.11-.35-2.33-.5-3.5-.5-1.95 0-4.05.4-5.5 1.5-1.45-1.1-3.55-1.5-5.5-1.5S2.45 4.9 1 6v14.65c0 .25.25.5.5.5.1 0 .15-.05.25-.05C3.1 20.45 5.05 20 6.5 20c1.95 0 4.05.4 5.5 1.5 1.350-.85 3.8-1.5 5.5-1.5 1.65 0 3.35.3 4.75 1.05.1.05.15.05.25.05.25 0 .5-.25.5-.5V6c-.6-.45-1.25-.75-2-1m0 13.5c-1.1-.35-2.3-.5-3.5-.5-1.7 0-4.15.65-5.5 1.5V8c1.35-.85 3.8-1.5 5.5-1.5 1.2 0 2.4.15 3.5.5zM17.5 10.5c.88 0 1.73.09 2.5.26V9.24c-.79-.15-1.64-.24-2.5-.24-1.7 0-3.24.29-4.5.83v1.66c1.13-.64 2.7-.99 4.5-.99M13 12.49v1.66c1.13-.64 2.7-.99 4.5-.99.88 0 1.73.09 2.5.26V11.9c-.79-.15-1.64-.24-2.5-.24-1.7 0-3.24.3-4.5.83m4.5 1.84c-1.7 0-3.24.29-4.5.83v1.66c1.13-.64 2.7-.99 4.5-.99.88 0 1.73.09 2.5.26v-1.52c-.79-.16-1.64-.24-2.5-.24"/></svg>
<div class="t" style="left:504.20px;top:572.58px;font-size:13.5px;color:#ef8b16;letter-spacing:-0.069px;">Lesen</div>
<div class="t" style="left:615.00px;top:571.58px;font-size:14.5px;color:#7b7b82;letter-spacing:0.050px;">Auswahlmöglichkeiten</div>
<div class="t" style="left:802.00px;top:571.58px;font-size:14.5px;color:#4c4c58;letter-spacing:-0.070px;">Einkaufen im Alltag</div>
<div class="t" style="left:1391.40px;top:573.33px;font-size:12px;color:#6c6c74;letter-spacing:-0.127px;">12</div>
<div class="chip" style="top:568.575px;background:#e3f0fd"></div>
<div class="t" style="left:1505.20px;top:571.58px;font-size:14.5px;color:#2a8bf2;letter-spacing:0.212px;">Entwurf</div>
<svg class="i" style="left:1623.85px;top:568.58px;width:22.80px;height:22.80px" viewBox="0 0 24 24"><path fill="#2a8bf2" d="M12 4.5C7 4.5 2.73 7.61 1 12c1.730 4.39 6 7.5 11 7.5s9.27-3.11 11-7.5c-1.73-4.39-6-7.5-11-7.5M12 17c-2.76 0-5-2.24-5-5s2.24-5 5-5 5 2.24 5 5-2.24 5-5 5m0-8c-1.66 0-3 1.34-3 3s1.34 3 3 3 3-1.34 3-3-1.34-3-3-3"/></svg>
<svg class="i" style="left:1661.20px;top:568.58px;width:22.70px;height:22.70px" viewBox="0 0 24 24"><path fill="#2a8bf2" d="M3 10h11v2H3zm0-2h11V6H3zm0 8h7v-2H3zm15.01-3.13.71-.71c.39-.39 1.02-.39 1.41 0l.71.71c.39.39.39 1.02 0 1.41l-.71.71zm-.71.71-5.3 5.3V21h2.12l5.3-5.3z"/></svg>
<svg class="i" style="left:1698.70px;top:570.02px;width:19.00px;height:19.00px" viewBox="0 0 24 24"><path fill="#2a8bf2" d="M16 1H4c-1.1 0-2 .9-2 2v14h2V3h12V1zm3 4H8c-1.1 0-2 .9-2 2v14c0 1.1.9 2 2 2h11c1.1 0 2-.9 2-2V7c0-1.1-.9-2-2-2zm0 16H8V7h11v14z"/></svg>
<svg class="i" style="left:1731.75px;top:568.58px;width:23.10px;height:23.10px" viewBox="0 0 24 24"><path fill="#ec3a2f" d="M6 19c0 1.1.9 2 2 2h8c1.1 0 2-.9 2-2V7H6zm2.46-7.12 1.41-1.41L12 12.59l2.12-2.12 1.41 1.41L13.41 14l2.12 2.12-1.41 1.41L12 15.41l-2.12 2.12-1.41-1.41L10.59 14zM15.5 4l-1-1h-5l-1 1H5v2h14V4z"/></svg>
<div class="row" style="top:603.000px;background:#fff"></div>
<div class="t" style="left:131.70px;top:620.20px;font-size:12px;color:#6c6c74;letter-spacing:-0.127px;">19.3.2026, 14:08</div>
<div class="t" style="left:268.00px;top:620.20px;font-size:12px;color:#6c6c74;letter-spacing:-0.161px;">Q0002972</div>
<div class="t" style="left:388.00px;top:618.45px;font-size:14px;color:#ef8b16;letter-spacing:-0.500px;-webkit-text-stroke:0.4px #ef8b16;">B1</div>
<svg class="i" style="left:473.86px;top:615.45px;width:22.50px;height:22.50px" viewBox="0 0 24 24"><path fill="#ef8b16" d="M21 5c-1.11-.35-2.33-.5-3.5-.5-1.95 0-4.05.4-5.5 1.5-1.45-1.1-3.55-1.5-5.5-1.5S2.45 4.9 1 6v14.65c0 .25.25.5.5.5.1 0 .15-.05.25-.05C3.1 20.45 5.05 20 6.5 20c1.95 0 4.05.4 5.5 1.5 1.350-.85 3.8-1.5 5.5-1.5 1.65 0 3.35.3 4.75 1.05.1.05.15.05.25.05.25 0 .5-.25.5-.5V6c-.6-.45-1.25-.75-2-1m0 13.5c-1.1-.35-2.3-.5-3.5-.5-1.7 0-4.15.65-5.5 1.5V8c1.35-.85 3.8-1.5 5.5-1.5 1.2 0 2.4.15 3.5.5zM17.5 10.5c.88 0 1.73.09 2.5.26V9.24c-.79-.15-1.64-.24-2.5-.24-1.7 0-3.24.29-4.5.83v1.66c1.13-.64 2.7-.99 4.5-.99M13 12.49v1.66c1.13-.64 2.7-.99 4.5-.99.88 0 1.73.09 2.5.26V11.9c-.79-.15-1.64-.24-2.5-.24-1.7 0-3.24.3-4.5.83m4.5 1.84c-1.7 0-3.24.29-4.5.83v1.66c1.13-.64 2.7-.99 4.5-.99.88 0 1.73.09 2.5.26v-1.52c-.79-.16-1.64-.24-2.5-.24"/></svg>
<div class="t" style="left:504.20px;top:619.45px;font-size:13.5px;color:#ef8b16;letter-spacing:-0.069px;">Lesen</div>
<div class="t" style="left:615.00px;top:618.45px;font-size:14.5px;color:#7b7b82;letter-spacing:-0.260px;">Ziehen Und Ablegen</div>
<div class="t" style="left:802.00px;top:618.45px;font-size:14.5px;color:#4c4c58;letter-spacing:-0.070px;">Einkaufen und Alltag</div>
<div class="t" style="left:1391.40px;top:620.20px;font-size:12px;color:#6c6c74;letter-spacing:-0.127px;">8</div>
<div class="chip" style="top:615.450px;background:#e3f0fd"></div>
<div class="t" style="left:1505.20px;top:618.45px;font-size:14.5px;color:#2a8bf2;letter-spacing:0.212px;">Entwurf</div>
<svg class="i" style="left:1623.85px;top:615.45px;width:22.80px;height:22.80px" viewBox="0 0 24 24"><path fill="#2a8bf2" d="M12 4.5C7 4.5 2.73 7.61 1 12c1.730 4.39 6 7.5 11 7.5s9.27-3.11 11-7.5c-1.73-4.39-6-7.5-11-7.5M12 17c-2.76 0-5-2.24-5-5s2.24-5 5-5 5 2.24 5 5-2.24 5-5 5m0-8c-1.66 0-3 1.34-3 3s1.34 3 3 3 3-1.34 3-3-1.34-3-3-3"/></svg>
<svg class="i" style="left:1661.20px;top:615.45px;width:22.70px;height:22.70px" viewBox="0 0 24 24"><path fill="#2a8bf2" d="M3 10h11v2H3zm0-2h11V6H3zm0 8h7v-2H3zm15.01-3.13.71-.71c.39-.39 1.02-.39 1.41 0l.71.71c.39.39.39 1.02 0 1.41l-.71.71zm-.71.71-5.3 5.3V21h2.12l5.3-5.3z"/></svg>
<svg class="i" style="left:1698.70px;top:616.90px;width:19.00px;height:19.00px" viewBox="0 0 24 24"><path fill="#2a8bf2" d="M16 1H4c-1.1 0-2 .9-2 2v14h2V3h12V1zm3 4H8c-1.1 0-2 .9-2 2v14c0 1.1.9 2 2 2h11c1.1 0 2-.9 2-2V7c0-1.1-.9-2-2-2zm0 16H8V7h11v14z"/></svg>
<svg class="i" style="left:1731.75px;top:615.45px;width:23.10px;height:23.10px" viewBox="0 0 24 24"><path fill="#ec3a2f" d="M6 19c0 1.1.9 2 2 2h8c1.1 0 2-.9 2-2V7H6zm2.46-7.12 1.41-1.41L12 12.59l2.12-2.12 1.41 1.41L13.41 14l2.12 2.12-1.41 1.41L12 15.41l-2.12 2.12-1.41-1.41L10.59 14zM15.5 4l-1-1h-5l-1 1H5v2h14V4z"/></svg>
<div class="row" style="top:649.875px;background:#fff"></div>
<div class="t" style="left:131.70px;top:667.08px;font-size:12px;color:#6c6c74;letter-spacing:-0.127px;">19.3.2026, 09:58</div>
<div class="t" style="left:268.00px;top:667.08px;font-size:12px;color:#6c6c74;letter-spacing:-0.161px;">lesent5</div>
<div class="t" style="left:388.00px;top:665.33px;font-size:14px;color:#ef8b16;letter-spacing:-0.500px;-webkit-text-stroke:0.4px #ef8b16;">B1</div>
<svg class="i" style="left:473.86px;top:662.33px;width:22.50px;height:22.50px" viewBox="0 0 24 24"><path fill="#ef8b16" d="M21 5c-1.11-.35-2.33-.5-3.5-.5-1.95 0-4.05.4-5.5 1.5-1.45-1.1-3.55-1.5-5.5-1.5S2.45 4.9 1 6v14.65c0 .25.25.5.5.5.1 0 .15-.05.25-.05C3.1 20.45 5.05 20 6.5 20c1.95 0 4.05.4 5.5 1.5 1.350-.85 3.8-1.5 5.5-1.5 1.65 0 3.35.3 4.75 1.05.1.05.15.05.25.05.25 0 .5-.25.5-.5V6c-.6-.45-1.25-.75-2-1m0 13.5c-1.1-.35-2.3-.5-3.5-.5-1.7 0-4.15.65-5.5 1.5V8c1.35-.85 3.8-1.5 5.5-1.5 1.2 0 2.4.15 3.5.5zM17.5 10.5c.88 0 1.73.09 2.5.26V9.24c-.79-.15-1.64-.24-2.5-.24-1.7 0-3.24.29-4.5.83v1.66c1.13-.64 2.7-.99 4.5-.99M13 12.49v1.66c1.13-.64 2.7-.99 4.5-.99.88 0 1.73.09 2.5.26V11.9c-.79-.15-1.64-.24-2.5-.24-1.7 0-3.24.3-4.5.83m4.5 1.84c-1.7 0-3.24.29-4.5.83v1.66c1.13-.64 2.7-.99 4.5-.99.88 0 1.73.09 2.5.26v-1.52c-.79-.16-1.64-.24-2.5-.24"/></svg>
<div class="t" style="left:504.20px;top:666.33px;font-size:13.5px;color:#ef8b16;letter-spacing:-0.069px;">Lesen</div>
<div class="t" style="left:615.00px;top:665.33px;font-size:14.5px;color:#7b7b82;letter-spacing:0.050px;">Auswahlmöglichkeiten</div>
<div class="t" style="left:802.00px;top:665.33px;font-size:14.5px;color:#4c4c58;letter-spacing:-0.070px;">Einkaufen und Alltag</div>
<div class="t" style="left:1391.40px;top:667.08px;font-size:12px;color:#6c6c74;letter-spacing:-0.127px;">14</div>
<div class="chip" style="top:662.325px;background:#e3f0fd"></div>
<div class="t" style="left:1505.20px;top:665.33px;font-size:14.5px;color:#2a8bf2;letter-spacing:0.212px;">Entwurf</div>
<svg class="i" style="left:1623.85px;top:662.33px;width:22.80px;height:22.80px" viewBox="0 0 24 24"><path fill="#2a8bf2" d="M12 4.5C7 4.5 2.73 7.61 1 12c1.730 4.39 6 7.5 11 7.5s9.27-3.11 11-7.5c-1.73-4.39-6-7.5-11-7.5M12 17c-2.76 0-5-2.24-5-5s2.24-5 5-5 5 2.24 5 5-2.24 5-5 5m0-8c-1.66 0-3 1.34-3 3s1.34 3 3 3 3-1.34 3-3-1.34-3-3-3"/></svg>
<svg class="i" style="left:1661.20px;top:662.33px;width:22.70px;height:22.70px" viewBox="0 0 24 24"><path fill="#2a8bf2" d="M3 10h11v2H3zm0-2h11V6H3zm0 8h7v-2H3zm15.01-3.13.71-.71c.39-.39 1.02-.39 1.41 0l.71.71c.39.39.39 1.02 0 1.41l-.71.71zm-.71.71-5.3 5.3V21h2.12l5.3-5.3z"/></svg>
<svg class="i" style="left:1698.70px;top:663.77px;width:19.00px;height:19.00px" viewBox="0 0 24 24"><path fill="#2a8bf2" d="M16 1H4c-1.1 0-2 .9-2 2v14h2V3h12V1zm3 4H8c-1.1 0-2 .9-2 2v14c0 1.1.9 2 2 2h11c1.1 0 2-.9 2-2V7c0-1.1-.9-2-2-2zm0 16H8V7h11v14z"/></svg>
<svg class="i" style="left:1731.75px;top:662.33px;width:23.10px;height:23.10px" viewBox="0 0 24 24"><path fill="#ec3a2f" d="M6 19c0 1.1.9 2 2 2h8c1.1 0 2-.9 2-2V7H6zm2.46-7.12 1.41-1.41L12 12.59l2.12-2.12 1.41 1.41L13.41 14l2.12 2.12-1.41 1.41L12 15.41l-2.12 2.12-1.41-1.41L10.59 14zM15.5 4l-1-1h-5l-1 1H5v2h14V4z"/></svg>
<div class="row" style="top:696.750px;background:#fff"></div>
<div class="t" style="left:131.70px;top:713.95px;font-size:12px;color:#6c6c74;letter-spacing:-0.127px;">19.3.2026, 09:29</div>
<div class="t" style="left:268.00px;top:713.95px;font-size:12px;color:#6c6c74;letter-spacing:-0.161px;">lesent5</div>
<div class="t" style="left:388.00px;top:712.20px;font-size:14px;color:#ef8b16;letter-spacing:-0.500px;-webkit-text-stroke:0.4px #ef8b16;">B1</div>
<svg class="i" style="left:473.86px;top:709.20px;width:22.50px;height:22.50px" viewBox="0 0 24 24"><path fill="#ef8b16" d="M21 5c-1.11-.35-2.33-.5-3.5-.5-1.95 0-4.05.4-5.5 1.5-1.45-1.1-3.55-1.5-5.5-1.5S2.45 4.9 1 6v14.65c0 .25.25.5.5.5.1 0 .15-.05.25-.05C3.1 20.45 5.05 20 6.5 20c1.95 0 4.05.4 5.5 1.5 1.350-.85 3.8-1.5 5.5-1.5 1.65 0 3.35.3 4.75 1.05.1.05.15.05.25.05.25 0 .5-.25.5-.5V6c-.6-.45-1.25-.75-2-1m0 13.5c-1.1-.35-2.3-.5-3.5-.5-1.7 0-4.15.65-5.5 1.5V8c1.35-.85 3.8-1.5 5.5-1.5 1.2 0 2.4.15 3.5.5zM17.5 10.5c.88 0 1.73.09 2.5.26V9.24c-.79-.15-1.64-.24-2.5-.24-1.7 0-3.24.29-4.5.83v1.66c1.13-.64 2.7-.99 4.5-.99M13 12.49v1.66c1.13-.64 2.7-.99 4.5-.99.88 0 1.73.09 2.5.26V11.9c-.79-.15-1.64-.24-2.5-.24-1.7 0-3.24.3-4.5.83m4.5 1.84c-1.7 0-3.24.29-4.5.83v1.66c1.13-.64 2.7-.99 4.5-.99.88 0 1.73.09 2.5.26v-1.52c-.79-.16-1.64-.24-2.5-.24"/></svg>
<div class="t" style="left:504.20px;top:713.20px;font-size:13.5px;color:#ef8b16;letter-spacing:-0.069px;">Lesen</div>
<div class="t" style="left:615.00px;top:712.20px;font-size:14.5px;color:#7b7b82;letter-spacing:0.050px;">Auswahlmöglichkeiten</div>
<div class="t" style="left:803.00px;top:712.20px;font-size:14.5px;color:#4c4c58;letter-spacing:-0.070px;">Gesundheit und Arzt</div>
<div class="t" style="left:1391.40px;top:713.95px;font-size:12px;color:#6c6c74;letter-spacing:-0.127px;">10</div>
<div class="chip" style="top:709.200px;background:#e3f0fd"></div>
<div class="t" style="left:1505.20px;top:712.20px;font-size:14.5px;color:#2a8bf2;letter-spacing:0.212px;">Entwurf</div>
<svg class="i" style="left:1623.85px;top:709.20px;width:22.80px;height:22.80px" viewBox="0 0 24 24"><path fill="#2a8bf2" d="M12 4.5C7 4.5 2.73 7.61 1 12c1.730 4.39 6 7.5 11 7.5s9.27-3.11 11-7.5c-1.73-4.39-6-7.5-11-7.5M12 17c-2.76 0-5-2.24-5-5s2.24-5 5-5 5 2.24 5 5-2.24 5-5 5m0-8c-1.66 0-3 1.34-3 3s1.34 3 3 3 3-1.34 3-3-1.34-3-3-3"/></svg>
<svg class="i" style="left:1661.20px;top:709.20px;width:22.70px;height:22.70px" viewBox="0 0 24 24"><path fill="#2a8bf2" d="M3 10h11v2H3zm0-2h11V6H3zm0 8h7v-2H3zm15.01-3.13.71-.71c.39-.39 1.02-.39 1.41 0l.71.71c.39.39.39 1.02 0 1.41l-.71.71zm-.71.71-5.3 5.3V21h2.12l5.3-5.3z"/></svg>
<svg class="i" style="left:1698.70px;top:710.65px;width:19.00px;height:19.00px" viewBox="0 0 24 24"><path fill="#2a8bf2" d="M16 1H4c-1.1 0-2 .9-2 2v14h2V3h12V1zm3 4H8c-1.1 0-2 .9-2 2v14c0 1.1.9 2 2 2h11c1.1 0 2-.9 2-2V7c0-1.1-.9-2-2-2zm0 16H8V7h11v14z"/></svg>
<svg class="i" style="left:1731.75px;top:709.20px;width:23.10px;height:23.10px" viewBox="0 0 24 24"><path fill="#ec3a2f" d="M6 19c0 1.1.9 2 2 2h8c1.1 0 2-.9 2-2V7H6zm2.46-7.12 1.41-1.41L12 12.59l2.12-2.12 1.41 1.41L13.41 14l2.12 2.12-1.41 1.41L12 15.41l-2.12 2.12-1.41-1.41L10.59 14zM15.5 4l-1-1h-5l-1 1H5v2h14V4z"/></svg>
<div class="row" style="top:743.625px;background:#fff"></div>
<div class="t" style="left:131.70px;top:760.83px;font-size:12px;color:#6c6c74;letter-spacing:-0.127px;">19.3.2026, 07:56</div>
<div class="t" style="left:268.00px;top:760.83px;font-size:12px;color:#6c6c74;letter-spacing:-0.161px;">lesent5</div>
<div class="t" style="left:388.00px;top:759.08px;font-size:14px;color:#ef8b16;letter-spacing:-0.500px;-webkit-text-stroke:0.4px #ef8b16;">B1</div>
<svg class="i" style="left:473.86px;top:756.08px;width:22.50px;height:22.50px" viewBox="0 0 24 24"><path fill="#ef8b16" d="M21 5c-1.11-.35-2.33-.5-3.5-.5-1.95 0-4.05.4-5.5 1.5-1.45-1.1-3.55-1.5-5.5-1.5S2.45 4.9 1 6v14.65c0 .25.25.5.5.5.1 0 .15-.05.25-.05C3.1 20.45 5.05 20 6.5 20c1.95 0 4.05.4 5.5 1.5 1.350-.85 3.8-1.5 5.5-1.5 1.65 0 3.35.3 4.75 1.05.1.05.15.05.25.05.25 0 .5-.25.5-.5V6c-.6-.45-1.25-.75-2-1m0 13.5c-1.1-.35-2.3-.5-3.5-.5-1.7 0-4.15.65-5.5 1.5V8c1.35-.85 3.8-1.5 5.5-1.5 1.2 0 2.4.15 3.5.5zM17.5 10.5c.88 0 1.73.09 2.5.26V9.24c-.79-.15-1.64-.24-2.5-.24-1.7 0-3.24.29-4.5.83v1.66c1.13-.64 2.7-.99 4.5-.99M13 12.49v1.66c1.13-.64 2.7-.99 4.5-.99.88 0 1.73.09 2.5.26V11.9c-.79-.15-1.64-.24-2.5-.24-1.7 0-3.24.3-4.5.83m4.5 1.84c-1.7 0-3.24.29-4.5.83v1.66c1.13-.64 2.7-.99 4.5-.99.88 0 1.73.09 2.5.26v-1.52c-.79-.16-1.64-.24-2.5-.24"/></svg>
<div class="t" style="left:504.20px;top:760.08px;font-size:13.5px;color:#ef8b16;letter-spacing:-0.069px;">Lesen</div>
<div class="t" style="left:615.00px;top:759.08px;font-size:14.5px;color:#7b7b82;letter-spacing:0.050px;">Auswahlmöglichkeiten</div>
<div class="t" style="left:802.00px;top:759.08px;font-size:14.5px;color:#4c4c58;letter-spacing:-0.070px;">Beim Arzt</div>
<div class="t" style="left:1391.40px;top:760.83px;font-size:12px;color:#6c6c74;letter-spacing:-0.127px;">12</div>
<div class="chip" style="top:756.075px;background:#e3f0fd"></div>
<div class="t" style="left:1505.20px;top:759.08px;font-size:14.5px;color:#2a8bf2;letter-spacing:0.212px;">Entwurf</div>
<svg class="i" style="left:1623.85px;top:756.08px;width:22.80px;height:22.80px" viewBox="0 0 24 24"><path fill="#2a8bf2" d="M12 4.5C7 4.5 2.73 7.61 1 12c1.730 4.39 6 7.5 11 7.5s9.27-3.11 11-7.5c-1.73-4.39-6-7.5-11-7.5M12 17c-2.76 0-5-2.24-5-5s2.24-5 5-5 5 2.24 5 5-2.24 5-5 5m0-8c-1.66 0-3 1.34-3 3s1.34 3 3 3 3-1.34 3-3-1.34-3-3-3"/></svg>
<svg class="i" style="left:1661.20px;top:756.08px;width:22.70px;height:22.70px" viewBox="0 0 24 24"><path fill="#2a8bf2" d="M3 10h11v2H3zm0-2h11V6H3zm0 8h7v-2H3zm15.01-3.13.71-.71c.39-.39 1.02-.39 1.41 0l.71.71c.39.39.39 1.02 0 1.41l-.71.71zm-.71.71-5.3 5.3V21h2.12l5.3-5.3z"/></svg>
<svg class="i" style="left:1698.70px;top:757.52px;width:19.00px;height:19.00px" viewBox="0 0 24 24"><path fill="#2a8bf2" d="M16 1H4c-1.1 0-2 .9-2 2v14h2V3h12V1zm3 4H8c-1.1 0-2 .9-2 2v14c0 1.1.9 2 2 2h11c1.1 0 2-.9 2-2V7c0-1.1-.9-2-2-2zm0 16H8V7h11v14z"/></svg>
<svg class="i" style="left:1731.75px;top:756.08px;width:23.10px;height:23.10px" viewBox="0 0 24 24"><path fill="#ec3a2f" d="M6 19c0 1.1.9 2 2 2h8c1.1 0 2-.9 2-2V7H6zm2.46-7.12 1.41-1.41L12 12.59l2.12-2.12 1.41 1.41L13.41 14l2.12 2.12-1.41 1.41L12 15.41l-2.12 2.12-1.41-1.41L10.59 14zM15.5 4l-1-1h-5l-1 1H5v2h14V4z"/></svg>
<div class="row" style="top:790.500px;background:#fff"></div>
<div class="t" style="left:131.70px;top:807.70px;font-size:12px;color:#6c6c74;letter-spacing:-0.127px;">16.3.2026, 09:53</div>
<div class="t" style="left:268.00px;top:807.70px;font-size:12px;color:#6c6c74;letter-spacing:-0.161px;">Q0002966</div>
<div class="t" style="left:388.00px;top:805.95px;font-size:14px;color:#ef8b16;letter-spacing:-0.500px;-webkit-text-stroke:0.4px #ef8b16;">B1</div>
<svg class="i" style="left:473.86px;top:802.95px;width:22.50px;height:22.50px" viewBox="0 0 24 24"><path fill="#ef8b16" d="M21 5c-1.11-.35-2.33-.5-3.5-.5-1.95 0-4.05.4-5.5 1.5-1.45-1.1-3.55-1.5-5.5-1.5S2.45 4.9 1 6v14.65c0 .25.25.5.5.5.1 0 .15-.05.25-.05C3.1 20.45 5.05 20 6.5 20c1.95 0 4.05.4 5.5 1.5 1.350-.85 3.8-1.5 5.5-1.5 1.65 0 3.35.3 4.75 1.05.1.05.15.05.25.05.25 0 .5-.25.5-.5V6c-.6-.45-1.25-.75-2-1m0 13.5c-1.1-.35-2.3-.5-3.5-.5-1.7 0-4.15.65-5.5 1.5V8c1.35-.85 3.8-1.5 5.5-1.5 1.2 0 2.4.15 3.5.5zM17.5 10.5c.88 0 1.73.09 2.5.26V9.24c-.79-.15-1.64-.24-2.5-.24-1.7 0-3.24.29-4.5.83v1.66c1.13-.64 2.7-.99 4.5-.99M13 12.49v1.66c1.13-.64 2.7-.99 4.5-.99.88 0 1.73.09 2.5.26V11.9c-.79-.15-1.64-.24-2.5-.24-1.7 0-3.24.3-4.5.83m4.5 1.84c-1.7 0-3.24.29-4.5.83v1.66c1.13-.64 2.7-.99 4.5-.99.88 0 1.73.09 2.5.26v-1.52c-.79-.16-1.64-.24-2.5-.24"/></svg>
<div class="t" style="left:504.20px;top:806.95px;font-size:13.5px;color:#ef8b16;letter-spacing:-0.069px;">Lesen</div>
<div class="t" style="left:615.00px;top:805.95px;font-size:14.5px;color:#7b7b82;letter-spacing:-0.260px;">Ziehen Und Ablegen</div>
<div class="t" style="left:803.00px;top:805.95px;font-size:14.5px;color:#4c4c58;letter-spacing:-0.070px;">Gesundheit und Arzt</div>
<div class="t" style="left:1391.40px;top:807.70px;font-size:12px;color:#6c6c74;letter-spacing:-0.127px;">10</div>
<div class="chip" style="top:802.950px;background:#e3f0fd"></div>
<div class="t" style="left:1505.20px;top:805.95px;font-size:14.5px;color:#2a8bf2;letter-spacing:0.212px;">Entwurf</div>
<svg class="i" style="left:1623.85px;top:802.95px;width:22.80px;height:22.80px" viewBox="0 0 24 24"><path fill="#2a8bf2" d="M12 4.5C7 4.5 2.73 7.61 1 12c1.730 4.39 6 7.5 11 7.5s9.27-3.11 11-7.5c-1.73-4.39-6-7.5-11-7.5M12 17c-2.76 0-5-2.24-5-5s2.24-5 5-5 5 2.24 5 5-2.24 5-5 5m0-8c-1.66 0-3 1.34-3 3s1.34 3 3 3 3-1.34 3-3-1.34-3-3-3"/></svg>
<svg class="i" style="left:1661.20px;top:802.95px;width:22.70px;height:22.70px" viewBox="0 0 24 24"><path fill="#2a8bf2" d="M3 10h11v2H3zm0-2h11V6H3zm0 8h7v-2H3zm15.01-3.13.71-.71c.39-.39 1.02-.39 1.41 0l.71.71c.39.39.39 1.02 0 1.41l-.71.71zm-.71.71-5.3 5.3V21h2.12l5.3-5.3z"/></svg>
<svg class="i" style="left:1698.70px;top:804.40px;width:19.00px;height:19.00px" viewBox="0 0 24 24"><path fill="#2a8bf2" d="M16 1H4c-1.1 0-2 .9-2 2v14h2V3h12V1zm3 4H8c-1.1 0-2 .9-2 2v14c0 1.1.9 2 2 2h11c1.1 0 2-.9 2-2V7c0-1.1-.9-2-2-2zm0 16H8V7h11v14z"/></svg>
<svg class="i" style="left:1731.75px;top:802.95px;width:23.10px;height:23.10px" viewBox="0 0 24 24"><path fill="#ec3a2f" d="M6 19c0 1.1.9 2 2 2h8c1.1 0 2-.9 2-2V7H6zm2.46-7.12 1.41-1.41L12 12.59l2.12-2.12 1.41 1.41L13.41 14l2.12 2.12-1.41 1.41L12 15.41l-2.12 2.12-1.41-1.41L10.59 14zM15.5 4l-1-1h-5l-1 1H5v2h14V4z"/></svg>
<div class="row" style="top:837.375px;background:#fff"></div>
<div class="t" style="left:131.70px;top:854.58px;font-size:12px;color:#6c6c74;letter-spacing:-0.127px;">16.3.2026, 09:33</div>
<div class="t" style="left:268.00px;top:854.58px;font-size:12px;color:#6c6c74;letter-spacing:-0.161px;">Q0002965</div>
<div class="t" style="left:388.00px;top:852.83px;font-size:14px;color:#ef8b16;letter-spacing:-0.500px;-webkit-text-stroke:0.4px #ef8b16;">B1</div>
<svg class="i" style="left:473.86px;top:849.83px;width:22.50px;height:22.50px" viewBox="0 0 24 24"><path fill="#ef8b16" d="M21 5c-1.11-.35-2.33-.5-3.5-.5-1.95 0-4.05.4-5.5 1.5-1.45-1.1-3.55-1.5-5.5-1.5S2.45 4.9 1 6v14.65c0 .25.25.5.5.5.1 0 .15-.05.25-.05C3.1 20.45 5.05 20 6.5 20c1.95 0 4.05.4 5.5 1.5 1.350-.85 3.8-1.5 5.5-1.5 1.65 0 3.35.3 4.75 1.05.1.05.15.05.25.05.25 0 .5-.25.5-.5V6c-.6-.45-1.25-.75-2-1m0 13.5c-1.1-.35-2.3-.5-3.5-.5-1.7 0-4.15.65-5.5 1.5V8c1.35-.85 3.8-1.5 5.5-1.5 1.2 0 2.4.15 3.5.5zM17.5 10.5c.88 0 1.73.09 2.5.26V9.24c-.79-.15-1.64-.24-2.5-.24-1.7 0-3.24.29-4.5.83v1.66c1.13-.64 2.7-.99 4.5-.99M13 12.49v1.66c1.13-.64 2.7-.99 4.5-.99.88 0 1.73.09 2.5.26V11.9c-.79-.15-1.64-.24-2.5-.24-1.7 0-3.24.3-4.5.83m4.5 1.84c-1.7 0-3.24.29-4.5.83v1.66c1.13-.64 2.7-.99 4.5-.99.88 0 1.73.09 2.5.26v-1.52c-.79-.16-1.64-.24-2.5-.24"/></svg>
<div class="t" style="left:504.20px;top:853.83px;font-size:13.5px;color:#ef8b16;letter-spacing:-0.069px;">Lesen</div>
<div class="t" style="left:615.00px;top:852.83px;font-size:14.5px;color:#7b7b82;letter-spacing:-0.260px;">Ziehen Und Ablegen</div>
<div class="t" style="left:803.00px;top:852.83px;font-size:14.5px;color:#4c4c58;letter-spacing:-0.070px;">Wohnung und Umzug</div>
<div class="t" style="left:1391.40px;top:854.58px;font-size:12px;color:#6c6c74;letter-spacing:-0.127px;">10</div>
<div class="chip" style="top:849.825px;background:#e3f0fd"></div>
<div class="t" style="left:1505.20px;top:852.83px;font-size:14.5px;color:#2a8bf2;letter-spacing:0.212px;">Entwurf</div>
<svg class="i" style="left:1623.85px;top:849.83px;width:22.80px;height:22.80px" viewBox="0 0 24 24"><path fill="#2a8bf2" d="M12 4.5C7 4.5 2.73 7.61 1 12c1.730 4.39 6 7.5 11 7.5s9.27-3.11 11-7.5c-1.73-4.39-6-7.5-11-7.5M12 17c-2.76 0-5-2.24-5-5s2.24-5 5-5 5 2.24 5 5-2.24 5-5 5m0-8c-1.66 0-3 1.34-3 3s1.34 3 3 3 3-1.34 3-3-1.34-3-3-3"/></svg>
<svg class="i" style="left:1661.20px;top:849.83px;width:22.70px;height:22.70px" viewBox="0 0 24 24"><path fill="#2a8bf2" d="M3 10h11v2H3zm0-2h11V6H3zm0 8h7v-2H3zm15.01-3.13.71-.71c.39-.39 1.02-.39 1.41 0l.71.71c.39.39.39 1.02 0 1.41l-.71.71zm-.71.71-5.3 5.3V21h2.12l5.3-5.3z"/></svg>
<svg class="i" style="left:1698.70px;top:851.27px;width:19.00px;height:19.00px" viewBox="0 0 24 24"><path fill="#2a8bf2" d="M16 1H4c-1.1 0-2 .9-2 2v14h2V3h12V1zm3 4H8c-1.1 0-2 .9-2 2v14c0 1.1.9 2 2 2h11c1.1 0 2-.9 2-2V7c0-1.1-.9-2-2-2zm0 16H8V7h11v14z"/></svg>
<svg class="i" style="left:1731.75px;top:849.83px;width:23.10px;height:23.10px" viewBox="0 0 24 24"><path fill="#ec3a2f" d="M6 19c0 1.1.9 2 2 2h8c1.1 0 2-.9 2-2V7H6zm2.46-7.12 1.41-1.41L12 12.59l2.12-2.12 1.41 1.41L13.41 14l2.12 2.12-1.41 1.41L12 15.41l-2.12 2.12-1.41-1.41L10.59 14zM15.5 4l-1-1h-5l-1 1H5v2h14V4z"/></svg>
<div class="row" style="top:884.250px;background:#fff"></div>
<div class="t" style="left:131.70px;top:901.45px;font-size:12px;color:#6c6c74;letter-spacing:-0.127px;">16.3.2026, 09:14</div>
<div class="t" style="left:268.00px;top:901.45px;font-size:12px;color:#6c6c74;letter-spacing:-0.161px;">Q0002964</div>
<div class="t" style="left:388.00px;top:899.70px;font-size:14px;color:#ef8b16;letter-spacing:-0.500px;-webkit-text-stroke:0.4px #ef8b16;">B1</div>
<svg class="i" style="left:473.86px;top:896.70px;width:22.50px;height:22.50px" viewBox="0 0 24 24"><path fill="#ef8b16" d="M21 5c-1.11-.35-2.33-.5-3.5-.5-1.95 0-4.05.4-5.5 1.5-1.45-1.1-3.55-1.5-5.5-1.5S2.45 4.9 1 6v14.65c0 .25.25.5.5.5.1 0 .15-.05.25-.05C3.1 20.45 5.05 20 6.5 20c1.95 0 4.05.4 5.5 1.5 1.350-.85 3.8-1.5 5.5-1.5 1.65 0 3.35.3 4.75 1.05.1.05.15.05.25.05.25 0 .5-.25.5-.5V6c-.6-.45-1.25-.75-2-1m0 13.5c-1.1-.35-2.3-.5-3.5-.5-1.7 0-4.15.65-5.5 1.5V8c1.35-.85 3.8-1.5 5.5-1.5 1.2 0 2.4.15 3.5.5zM17.5 10.5c.88 0 1.73.09 2.5.26V9.24c-.79-.15-1.64-.24-2.5-.24-1.7 0-3.24.29-4.5.83v1.66c1.13-.64 2.7-.99 4.5-.99M13 12.49v1.66c1.13-.64 2.7-.99 4.5-.99.88 0 1.73.09 2.5.26V11.9c-.79-.15-1.64-.24-2.5-.24-1.7 0-3.24.3-4.5.83m4.5 1.84c-1.7 0-3.24.29-4.5.83v1.66c1.13-.64 2.7-.99 4.5-.99.88 0 1.73.09 2.5.26v-1.52c-.79-.16-1.64-.24-2.5-.24"/></svg>
<div class="t" style="left:504.20px;top:900.70px;font-size:13.5px;color:#ef8b16;letter-spacing:-0.069px;">Lesen</div>
<div class="t" style="left:615.00px;top:899.70px;font-size:14.5px;color:#7b7b82;letter-spacing:0.050px;">Auswahlmöglichkeiten</div>
<div class="t" style="left:803.00px;top:899.70px;font-size:14.5px;color:#4c4c58;letter-spacing:-0.070px;">Wohnen und Umzug</div>
<div class="t" style="left:1391.40px;top:901.45px;font-size:12px;color:#6c6c74;letter-spacing:-0.127px;">10</div>
<div class="chip" style="top:896.700px;background:#e3f0fd"></div>
<div class="t" style="left:1505.20px;top:899.70px;font-size:14.5px;color:#2a8bf2;letter-spacing:0.212px;">Entwurf</div>
<svg class="i" style="left:1623.85px;top:896.70px;width:22.80px;height:22.80px" viewBox="0 0 24 24"><path fill="#2a8bf2" d="M12 4.5C7 4.5 2.73 7.61 1 12c1.730 4.39 6 7.5 11 7.5s9.27-3.11 11-7.5c-1.73-4.39-6-7.5-11-7.5M12 17c-2.76 0-5-2.24-5-5s2.24-5 5-5 5 2.24 5 5-2.24 5-5 5m0-8c-1.66 0-3 1.34-3 3s1.34 3 3 3 3-1.34 3-3-1.34-3-3-3"/></svg>
<svg class="i" style="left:1661.20px;top:896.70px;width:22.70px;height:22.70px" viewBox="0 0 24 24"><path fill="#2a8bf2" d="M3 10h11v2H3zm0-2h11V6H3zm0 8h7v-2H3zm15.01-3.13.71-.71c.39-.39 1.02-.39 1.41 0l.71.71c.39.39.39 1.02 0 1.41l-.71.71zm-.71.71-5.3 5.3V21h2.12l5.3-5.3z"/></svg>
<svg class="i" style="left:1698.70px;top:898.15px;width:19.00px;height:19.00px" viewBox="0 0 24 24"><path fill="#2a8bf2" d="M16 1H4c-1.1 0-2 .9-2 2v14h2V3h12V1zm3 4H8c-1.1 0-2 .9-2 2v14c0 1.1.9 2 2 2h11c1.1 0 2-.9 2-2V7c0-1.1-.9-2-2-2zm0 16H8V7h11v14z"/></svg>
<svg class="i" style="left:1731.75px;top:896.70px;width:23.10px;height:23.10px" viewBox="0 0 24 24"><path fill="#ec3a2f" d="M6 19c0 1.1.9 2 2 2h8c1.1 0 2-.9 2-2V7H6zm2.46-7.12 1.41-1.41L12 12.59l2.12-2.12 1.41 1.41L13.41 14l2.12 2.12-1.41 1.41L12 15.41l-2.12 2.12-1.41-1.41L10.59 14zM15.5 4l-1-1h-5l-1 1H5v2h14V4z"/></svg>
<div class="row" style="top:931.125px;background:#fff"></div>
<div class="t" style="left:131.70px;top:948.33px;font-size:12px;color:#6c6c74;letter-spacing:-0.127px;">14.3.2026, 23:58</div>
<div class="t" style="left:268.00px;top:948.33px;font-size:12px;color:#6c6c74;letter-spacing:-0.161px;">Q0002960</div>
<div class="t" style="left:388.00px;top:946.58px;font-size:14px;color:#ef8b16;letter-spacing:-0.500px;-webkit-text-stroke:0.4px #ef8b16;">B1</div>
<svg class="i" style="left:474.10px;top:943.58px;width:22.50px;height:22.50px" viewBox="0 0 24 24"><path fill="#ef8b16" d="M12 3c-4.97 0-9 4.03-9 9v7c0 1.1.9 2 2 2h4v-8H5v-1c0-3.87 3.13-7 7-7s7 3.13 7 7v1h-4v8h4c1.1 0 2-.9 2-2v-7c0-4.97-4.03-9-9-9"/></svg>
<div class="t" style="left:504.20px;top:947.58px;font-size:13.5px;color:#ef8b16;letter-spacing:0.560px;">Hören</div>
<div class="t" style="left:615.00px;top:946.58px;font-size:14.5px;color:#7b7b82;letter-spacing:0.050px;">Auswahlmöglichkeiten</div>
<div class="t" style="left:802.00px;top:946.58px;font-size:14.5px;color:#4c4c58;letter-spacing:-0.070px;">Hören Teil 3 / 5</div>
<div class="t" style="left:1391.40px;top:948.33px;font-size:12px;color:#6c6c74;letter-spacing:-0.127px;">5</div>
<div class="chip" style="top:943.575px;background:#e2f5ea"></div>
<div class="t" style="left:1496.30px;top:946.58px;font-size:14.3px;color:#27a35c;letter-spacing:-0.033px;">Genehmigt</div>
<svg class="i" style="left:1623.85px;top:943.58px;width:22.80px;height:22.80px" viewBox="0 0 24 24"><path fill="#2a8bf2" d="M12 4.5C7 4.5 2.73 7.61 1 12c1.730 4.39 6 7.5 11 7.5s9.27-3.11 11-7.5c-1.73-4.39-6-7.5-11-7.5M12 17c-2.76 0-5-2.24-5-5s2.24-5 5-5 5 2.24 5 5-2.24 5-5 5m0-8c-1.66 0-3 1.34-3 3s1.34 3 3 3 3-1.34 3-3-1.34-3-3-3"/></svg>
<svg class="i" style="left:1661.20px;top:943.58px;width:22.70px;height:22.70px" viewBox="0 0 24 24"><path fill="#c4c4c4" d="M3 10h11v2H3zm0-2h11V6H3zm0 8h7v-2H3zm15.01-3.13.71-.71c.39-.39 1.02-.39 1.41 0l.71.71c.39.39.39 1.02 0 1.41l-.71.71zm-.71.71-5.3 5.3V21h2.12l5.3-5.3z"/></svg>
<svg class="i" style="left:1698.70px;top:945.02px;width:19.00px;height:19.00px" viewBox="0 0 24 24"><path fill="#2a8bf2" d="M16 1H4c-1.1 0-2 .9-2 2v14h2V3h12V1zm3 4H8c-1.1 0-2 .9-2 2v14c0 1.1.9 2 2 2h11c1.1 0 2-.9 2-2V7c0-1.1-.9-2-2-2zm0 16H8V7h11v14z"/></svg>
<svg class="i" style="left:1731.75px;top:943.58px;width:23.10px;height:23.10px" viewBox="0 0 24 24"><path fill="#c4c4c4" d="M6 19c0 1.1.9 2 2 2h8c1.1 0 2-.9 2-2V7H6zm2.46-7.12 1.41-1.41L12 12.59l2.12-2.12 1.41 1.41L13.41 14l2.12 2.12-1.41 1.41L12 15.41l-2.12 2.12-1.41-1.41L10.59 14zM15.5 4l-1-1h-5l-1 1H5v2h14V4z"/></svg>
<div class="row" style="top:978.000px;background:#fff"></div>
<div class="t" style="left:131.70px;top:995.20px;font-size:12px;color:#6c6c74;letter-spacing:-0.127px;">14.3.2026, 23:41</div>
<div class="t" style="left:268.00px;top:995.20px;font-size:12px;color:#6c6c74;letter-spacing:-0.161px;">Q0002959</div>
<div class="t" style="left:388.00px;top:993.45px;font-size:14px;color:#ef8b16;letter-spacing:-0.500px;-webkit-text-stroke:0.4px #ef8b16;">B1</div>
<svg class="i" style="left:474.10px;top:990.45px;width:22.50px;height:22.50px" viewBox="0 0 24 24"><path fill="#ef8b16" d="M12 3c-4.97 0-9 4.03-9 9v7c0 1.1.9 2 2 2h4v-8H5v-1c0-3.87 3.13-7 7-7s7 3.13 7 7v1h-4v8h4c1.1 0 2-.9 2-2v-7c0-4.97-4.03-9-9-9"/></svg>
<div class="t" style="left:504.20px;top:994.45px;font-size:13.5px;color:#ef8b16;letter-spacing:0.560px;">Hören</div>
<div class="t" style="left:615.00px;top:993.45px;font-size:14.5px;color:#7b7b82;letter-spacing:0.050px;">Auswahlmöglichkeiten</div>
<div class="t" style="left:802.00px;top:993.45px;font-size:14.5px;color:#4c4c58;letter-spacing:-0.070px;">Hören Teil 3 / 4</div>
<div class="t" style="left:1391.40px;top:995.20px;font-size:12px;color:#6c6c74;letter-spacing:-0.127px;">5</div>
<div class="chip" style="top:990.450px;background:#e2f5ea"></div>
<div class="t" style="left:1496.30px;top:993.45px;font-size:14.3px;color:#27a35c;letter-spacing:-0.033px;">Genehmigt</div>
<svg class="i" style="left:1623.85px;top:990.45px;width:22.80px;height:22.80px" viewBox="0 0 24 24"><path fill="#2a8bf2" d="M12 4.5C7 4.5 2.73 7.61 1 12c1.730 4.39 6 7.5 11 7.5s9.27-3.11 11-7.5c-1.73-4.39-6-7.5-11-7.5M12 17c-2.76 0-5-2.24-5-5s2.24-5 5-5 5 2.24 5 5-2.24 5-5 5m0-8c-1.66 0-3 1.34-3 3s1.34 3 3 3 3-1.34 3-3-1.34-3-3-3"/></svg>
<svg class="i" style="left:1661.20px;top:990.45px;width:22.70px;height:22.70px" viewBox="0 0 24 24"><path fill="#c4c4c4" d="M3 10h11v2H3zm0-2h11V6H3zm0 8h7v-2H3zm15.01-3.13.71-.71c.39-.39 1.02-.39 1.41 0l.71.71c.39.39.39 1.02 0 1.41l-.71.71zm-.71.71-5.3 5.3V21h2.12l5.3-5.3z"/></svg>
<svg class="i" style="left:1698.70px;top:991.90px;width:19.00px;height:19.00px" viewBox="0 0 24 24"><path fill="#2a8bf2" d="M16 1H4c-1.1 0-2 .9-2 2v14h2V3h12V1zm3 4H8c-1.1 0-2 .9-2 2v14c0 1.1.9 2 2 2h11c1.1 0 2-.9 2-2V7c0-1.1-.9-2-2-2zm0 16H8V7h11v14z"/></svg>
<svg class="i" style="left:1731.75px;top:990.45px;width:23.10px;height:23.10px" viewBox="0 0 24 24"><path fill="#c4c4c4" d="M6 19c0 1.1.9 2 2 2h8c1.1 0 2-.9 2-2V7H6zm2.46-7.12 1.41-1.41L12 12.59l2.12-2.12 1.41 1.41L13.41 14l2.12 2.12-1.41 1.41L12 15.41l-2.12 2.12-1.41-1.41L10.59 14zM15.5 4l-1-1h-5l-1 1H5v2h14V4z"/></svg>
<div id="menu"></div><div id="mhl"></div>
<svg class="i" style="left:1057.15px;top:75.35px;width:22.20px;height:22.20px" viewBox="0 0 24 24"><path fill="#224a8c" d="M4 6H2v14c0 1.1.9 2 2 2h14v-2H4zm16-4H8c-1.1 0-2 .9-2 2v12c0 1.1.9 2 2 2h12c1.1 0 2-.9 2-2V4c0-1.1-.9-2-2-2m-5.99 13c-.59 0-1.05-.47-1.05-1.05 0-.59.47-1.04 1.05-1.04.59 0 1.04.45 1.04 1.04-.01.58-.45 1.05-1.04 1.05m2.5-6.17c-.63.93-1.23 1.21-1.56 1.81-.13.24-.18.4-.18 1.18h-1.520c0-.41-.06-1.08.26-1.65.41-.73 1.18-1.16 1.63-1.8.48-.68.21-1.94-1.14-1.94-.88 0-1.32.67-1.5 1.23l-1.37-.57C11.51 5.96 12.52 5 13.990 5c1.23 0 2.08.56 2.51 1.26.37.61.58 1.73.01 2.57"/></svg>
<div class="t" style="left:1090.50px;top:78.50px;font-size:13.8px;color:#4567a8;letter-spacing:0.092px;-webkit-text-stroke:0.3px #4567a8;">Fragen</div>
<div class="t" style="left:1087.20px;top:123.88px;font-size:14.25px;color:#1a1a1a;letter-spacing:0.076px;-webkit-text-stroke:0.25px #1a1a1a;">Prüfungen</div>
<div class="t" style="left:1087.20px;top:169.88px;font-size:14.25px;color:#1a1a1a;letter-spacing:0.076px;-webkit-text-stroke:0.25px #1a1a1a;">Lektionen</div>
<div class="t" style="left:1087.20px;top:215.88px;font-size:14.25px;color:#1a1a1a;letter-spacing:0.076px;-webkit-text-stroke:0.25px #1a1a1a;">Kurse</div>
<div class="t" style="left:1087.20px;top:261.88px;font-size:14.25px;color:#1a1a1a;letter-spacing:0.076px;-webkit-text-stroke:0.25px #1a1a1a;">Umfragen</div>
<div class="t" style="left:1087.20px;top:307.88px;font-size:14.25px;color:#1a1a1a;letter-spacing:0.076px;-webkit-text-stroke:0.25px #1a1a1a;">Dateimanager</div>
<div id="focus"></div><div id="cursor"></div>
<div id="fab"></div><svg class="i" style="left:1848px;top:958px;width:26px;height:30px" viewBox="0 0 26 30">
<path d="M15.8 5 C18.2 5 19.6 6.2 19.2 7.6 L20.6 8.4 C22 9.5 21.6 13 18.8 15.2 C17.2 16.4 15.8 16.9 15.6 18.6 C15.4 22 13.6 24.8 10.8 24.8 C8.8 24.8 7.2 23.8 6.3 22.4 L5.4 21.7 C3.4 20.2 3.9 16.6 6.6 14.8 C8.4 13.6 9.8 13.2 9.9 11.2 C10 7.8 12.6 5 15.8 5 Z" fill="#000"/>
<path d="M9.2 14.4 L22 7.6 M4.6 23.1 L17 16.2" stroke="#fff" stroke-width="1.5"/>
</svg>
<div id="vtrack"></div><div id="htrack"></div><div id="corner"></div>
<div id="vthumb"></div><div id="hthumb"></div>
<svg class="i" style="left:1901px;top:0;width:19px;height:19px" viewBox="0 0 19 19"><path d="M9.5 6.2 L15.4 13.8 Q15.7 14.8 14.6 14.8 L4.4 14.8 Q3.3 14.8 3.6 13.8 Z" fill="#8a8a8a"/></svg>
<svg class="i" style="left:1901px;top:994px;width:19px;height:19px" viewBox="0 0 19 19"><path d="M9.5 13.8 L15.4 6.2 Q15.7 5.2 14.6 5.2 L4.4 5.2 Q3.3 5.2 3.6 6.2 Z" fill="#8a8a8a"/></svg>
<svg class="i" style="left:0;top:1013px;width:19px;height:19px" viewBox="0 0 19 19"><path d="M6 9.8 L14 4.2 Q14.8 3.8 14.8 4.8 L14.8 14.8 Q14.8 15.8 14 15.4 Z" fill="#8a8a8a"/></svg>
<svg class="i" style="left:1882px;top:1013px;width:19px;height:19px" viewBox="0 0 19 19"><path d="M13 9.8 L5 4.2 Q4.2 3.8 4.2 4.8 L4.2 14.8 Q4.2 15.8 5 15.4 Z" fill="#8a8a8a"/></svg></body></html>
